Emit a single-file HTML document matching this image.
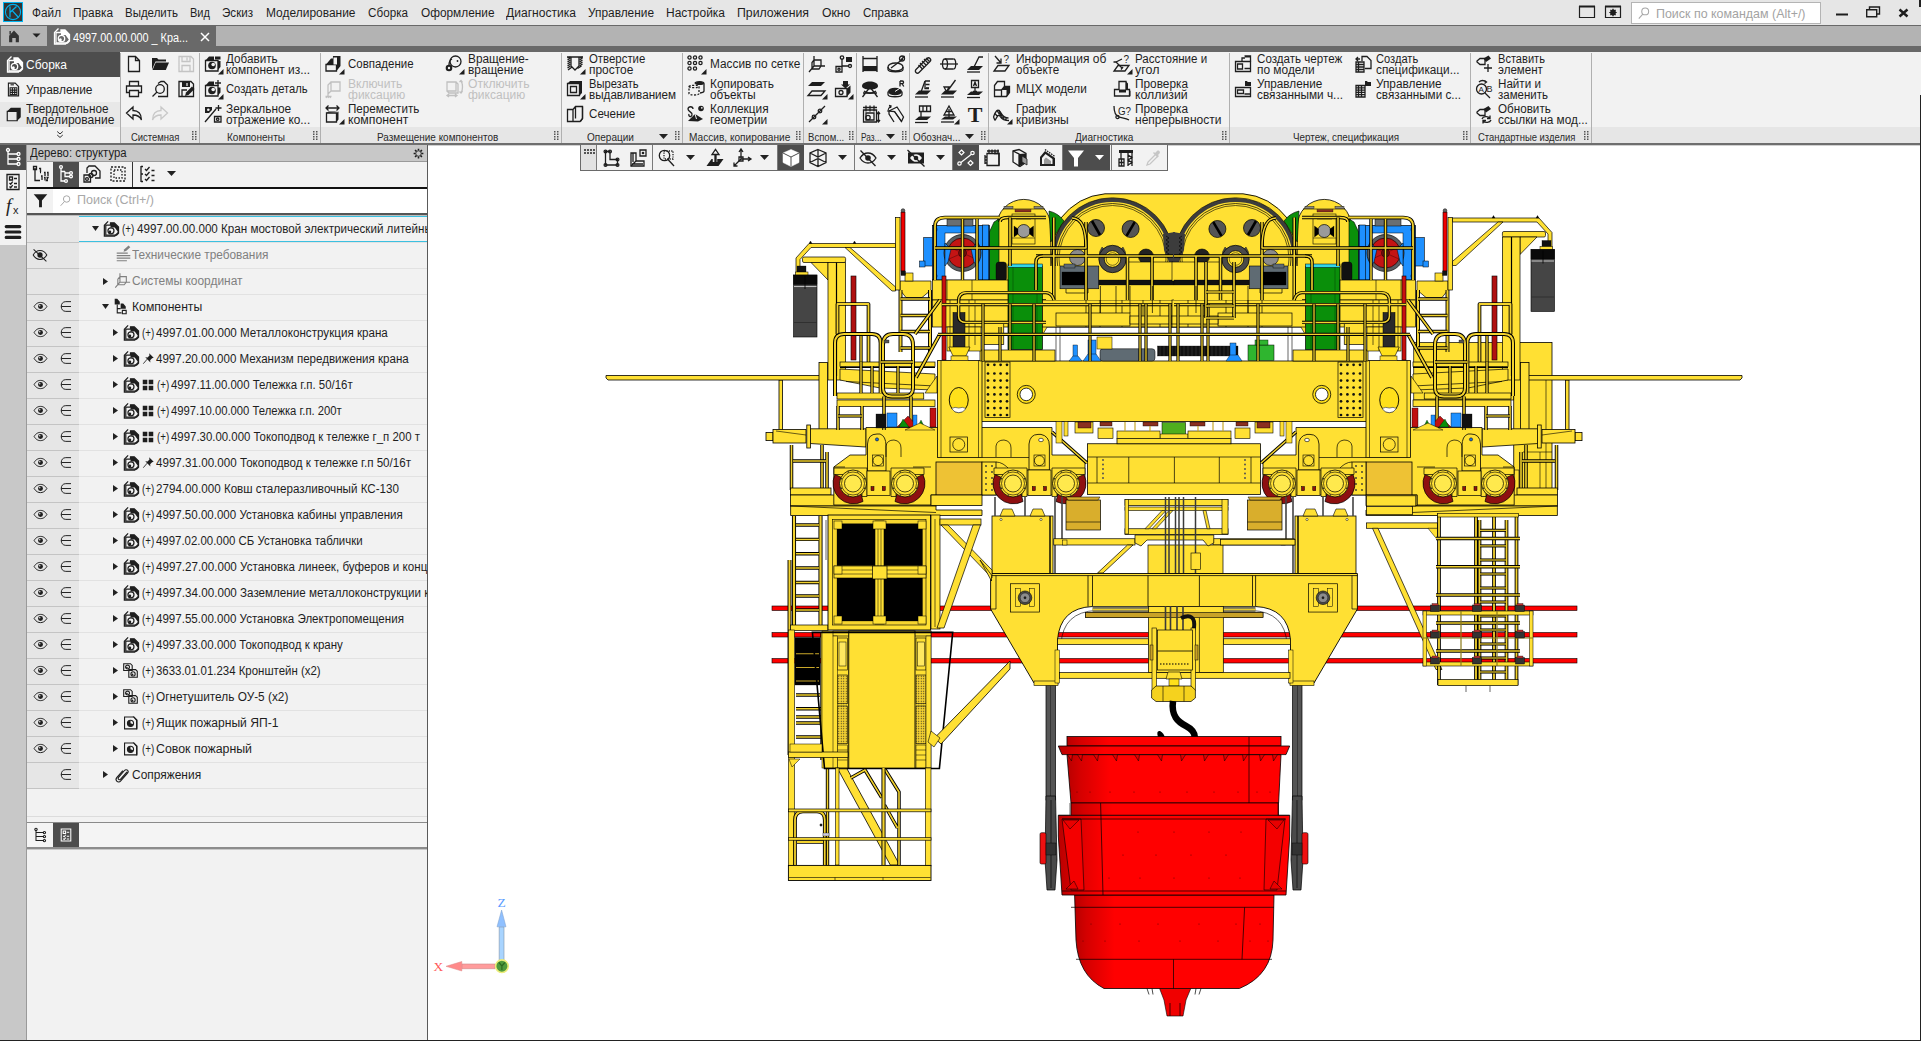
<!DOCTYPE html>
<html lang="ru"><head><meta charset="utf-8"><title>КОМПАС-3D</title><style>html,body{margin:0;padding:0}body{width:1921px;height:1041px;overflow:hidden;position:relative;background:#fff;font-family:"Liberation Sans",sans-serif;font-size:13px;color:#1e1e1e}
div,span.t,svg.i{position:absolute}
.t{white-space:pre;line-height:16px;transform-origin:0 50%;display:block}
svg.i{overflow:visible;color:#1e1e1e}
#tp svg.i{color:#1e1e1e}</style></head><body>
<svg width="0" height="0" style="position:absolute"><defs><symbol id="new" overflow="visible"><path d="M4.5 2.5h7l4 4v11h-11z M11.5 2.5v4h4" stroke="currentColor" fill="none" stroke-width="1.3"/></symbol><symbol id="open" overflow="visible"><path d="M2 4h5l1.5 1.5h7.5v2h-10.5l-3.5 8z" fill="currentColor" stroke="none"/><path d="M2.5 16l3.2-7.5h13.3l-3.2 7.5z" fill="currentColor" stroke="none"/></symbol><symbol id="save" overflow="visible"><path d="M3 2.5h12l2.5 2.5v12.5h-14.5z M6 2.5v5h8v-5 M11 3.5v3 M6 17.5v-6h8v6" stroke="currentColor" fill="none" stroke-width="1.3"/></symbol><symbol id="print" overflow="visible"><path d="M5.500 7v-4.5h9v4.500 M5.500 13.500h-3.000v-6.500h15v6.500h-3.000 M5.500 11.500h9v6h-9z" stroke="currentColor" fill="none" stroke-width="1.3"/></symbol><symbol id="preview" overflow="visible"><path d="M8 4.500l3-2h3l3.500 3.500v11.500h-9.500" stroke="currentColor" fill="none" stroke-width="1.3"/><circle cx="10" cy="10" r="4.300" stroke="currentColor" fill="none" stroke-width="1.3" fill="#f2f2f2"/><path d="M7 13l-4.500 4.500" stroke="currentColor" fill="none" stroke-width="1.3" stroke-width="2"/></symbol><symbol id="saveas" overflow="visible"><path d="M3 2.500h12l2.500 2.500v12.500h-14.500z" stroke="currentColor" fill="none" stroke-width="1.3"/><path d="M6 3h8v5h-8z" fill="currentColor" stroke="none"/><path d="M11 4v3" stroke="#f2f2f2" stroke-width="1.200"/><path d="M6 17v-6h5" stroke="currentColor" fill="none" stroke-width="1.3"/><path d="M9 17l1-3.500 6-6 2.500 2.500-6 6z" fill="currentColor" stroke="none"/></symbol><symbol id="undo" overflow="visible"><path d="M2.500 9l6.500-6v3.500c5 0 8.500 3 8.500 9.500c-1.500-3.500-4-5-8.500-5v4z" stroke="currentColor" fill="none" stroke-width="1.3"/></symbol><symbol id="redo" overflow="visible"><path d="M17.500 9l-6.500-6v3.500c-5 0-8.500 3-8.500 9.500c1.500-3.500 4-5 8.500-5v4z" stroke="currentColor" fill="none" stroke-width="1.3"/></symbol><symbol id="addcomp" overflow="visible"><path d="M2.500 6.500h12.500v10.500h-12.500z" stroke="currentColor" fill="none" stroke-width="1.3"/><path d="M2.500 6.500l3.500-4h5v4z M12 2.500h5.500v3h-5.500z M15 7h2.500v6l-2.500 3z" fill="currentColor" stroke="none"/><circle cx="9" cy="11.500" r="3.800" fill="currentColor" stroke="none"/><circle cx="10.200" cy="10.500" r="1.800" fill="#f2f2f2"/><path d="M20.500 15v5.500h-5.500z" fill="currentColor"/></symbol><symbol id="newpart" overflow="visible"><path d="M2.500 6.500h12.500v10.500h-12.500z" stroke="currentColor" fill="none" stroke-width="1.3"/><path d="M2.500 6.500l3.500-4h5v4z M15 8.500h2.500v5l-2.500 3z" fill="currentColor" stroke="none"/><path d="M15 1v6M12 4h6" stroke="currentColor" fill="none" stroke-width="1.3"/><circle cx="9" cy="11.500" r="3.800" fill="currentColor" stroke="none"/><circle cx="10.200" cy="10.500" r="1.800" fill="#f2f2f2"/><path d="M20.500 15v5.500h-5.500z" fill="currentColor"/></symbol><symbol id="mirror" overflow="visible"><path d="M2 18l11-13" stroke="currentColor" fill="none" stroke-width="1.3"/><path d="M2 3h7v3l-3 3h-4z" fill="currentColor" stroke="none"/><circle cx="5.300" cy="5.800" r="1.300" fill="#f2f2f2"/><path d="M15.500 1v6M12.500 4h6" stroke="currentColor" fill="none" stroke-width="1.3"/><path d="M11.500 12.500h6.500v5.500h-6.500z" stroke="currentColor" fill="none" stroke-width="1.3"/><circle cx="14.700" cy="15.200" r="1.200" stroke="currentColor" fill="none" stroke-width="1.3" stroke-width="1"/></symbol><symbol id="coincide" overflow="visible"><path d="M2 10.500h10.500v6.500h-10.500z" stroke="currentColor" fill="none" stroke-width="1.3"/><path d="M2 10.500l5-6 2 0v6z M9 2h7.500v10l-4 5v-6.500h-4z" fill="currentColor" stroke="none"/><path d="M9.500 3.500h3.500v7h-3.500z" fill="#f2f2f2"/><path d="M20.500 15v5.500h-5.500z" fill="currentColor"/></symbol><symbol id="fixon" overflow="visible"><path d="M7 3h9v9h-9z M7 12l-3 3v-9l3-3 M4 15v2 M1.500 17.500h6 M2 19l1-1.500 M4 19l1-1.500 M6 19l1-1.500" stroke="currentColor" fill="none" stroke-width="1.3" stroke-width="1"/></symbol><symbol id="movecomp" overflow="visible"><path d="M2.500 9h10v9h-10z" stroke="currentColor" fill="none" stroke-width="1.3"/><path d="M12.500 9l2-1.500v8l-2 2.500z M2.500 9l2-1.500h10" fill="currentColor" stroke="none"/><path d="M2 4h13 M4.500 1.500l-2.500 2.500 2.500 2.500 M12.500 1.500l2.500 2.500-2.500 2.500" stroke="currentColor" fill="none" stroke-width="1.3"/><path d="M20.500 15v5.500h-5.500z" fill="currentColor"/></symbol><symbol id="rotrot" overflow="visible"><circle cx="11.500" cy="7.500" r="5.500" stroke="currentColor" fill="none" stroke-width="1.3" stroke-width="1.500"/><circle cx="5" cy="14" r="3.300" fill="currentColor" stroke="none"/><circle cx="5" cy="14" r="1.200" fill="#f2f2f2"/><circle cx="13.500" cy="7" r=".9" fill="currentColor" stroke="none"/><path d="M5 11c0-3 1-5 3-6" stroke="currentColor" fill="none" stroke-width="1.3" stroke-width="1.500"/><path d="M20.500 15v5.500h-5.500z" fill="currentColor"/></symbol><symbol id="fixoff" overflow="visible"><path d="M3 3h9v9h-9z M12 3l2 2v9h-9l-2-2 M17 2c2 3 2 9 0 12 M15.500 3l1.500-1.500 1.500 2 M15.500 12.500l1.500 1.500 1.500-2 M3 16.500h10 M5 15l-2 1.500 2 1.500 M11 15l2 1.500-2 1.500" stroke="currentColor" fill="none" stroke-width="1.3" stroke-width="1"/></symbol><symbol id="hole" overflow="visible"><path d="M2 3h16 M6 3v9l4 4 4-4v-9" stroke="currentColor" fill="none" stroke-width="1.3"/><path d="M2.500 4l3-1M2.500 6l3-2M2.500 8l3-2M2.500 10l3-2M2.500 12l3-2M2.500 14l3-2M3 16l4-3M14.500 4l3-1M14.500 6l3-2M14.500 8l3-2M14.500 10l3-2M14.500 12l3-2M12.500 14.500l4-2.500" stroke="currentColor" fill="none" stroke-width="1.3" stroke-width=".8"/><path d="M20.500 15v5.500h-5.500z" fill="currentColor"/></symbol><symbol id="cutext" overflow="visible"><path d="M2.500 4.500h12v12h-12z" stroke="currentColor" fill="none" stroke-width="1.3"/><path d="M2.500 4.500l2.500-2.500h12v12l-2.500 2.500v-12z" fill="currentColor" stroke="none"/><path d="M5.500 7.500h6v6h-6z" stroke="currentColor" fill="none" stroke-width="1.3" stroke-width="2"/><path d="M20.500 15v5.500h-5.500z" fill="currentColor"/></symbol><symbol id="section" overflow="visible"><path d="M2.500 5.500h5.500v12h-5.500z M8 5.500l2.500-3h7v12l-2.500 3h-7.500 M10.500 2.500v12" stroke="currentColor" fill="none" stroke-width="1.3" stroke-width="1.400"/><path d="M15.500 17.500l2-3v-12" stroke="currentColor" fill="none" stroke-width="1.3" stroke-width="2"/></symbol><symbol id="gridarr" overflow="visible"><circle cx="3.5" cy="3.5" r="1.600" stroke="currentColor" fill="none" stroke-width="1.3" stroke-width="1.100"/><circle cx="3.5" cy="9" r="1.600" stroke="currentColor" fill="none" stroke-width="1.3" stroke-width="1.100"/><circle cx="3.5" cy="14.5" r="1.600" stroke="currentColor" fill="none" stroke-width="1.3" stroke-width="1.100"/><circle cx="9" cy="3.5" r="1.600" stroke="currentColor" fill="none" stroke-width="1.3" stroke-width="1.100"/><circle cx="9" cy="9" r="1.600" stroke="currentColor" fill="none" stroke-width="1.3" stroke-width="1.100"/><circle cx="9" cy="14.5" r="1.600" stroke="currentColor" fill="none" stroke-width="1.3" stroke-width="1.100"/><circle cx="14.5" cy="3.5" r="1.600" stroke="currentColor" fill="none" stroke-width="1.3" stroke-width="1.100"/><circle cx="14.5" cy="9" r="1.600" stroke="currentColor" fill="none" stroke-width="1.3" stroke-width="1.100"/><path d="M20.500 15v5.500h-5.500z" fill="currentColor"/></symbol><symbol id="copyobj" overflow="visible"><path d="M3 7.500c0 -1.500 10-1.500 10 0v7c0 2-10 2-10 0z M3 7.500c0 1.500 10 1.500 10 0" stroke="currentColor" fill="none" stroke-width="1.3" stroke-dasharray="2 1.500" stroke-width="1.100"/><path d="M9 4.500c0-2.500 9-2.500 9 0v7.500c0 1-2 1.800-4 2" stroke="currentColor" fill="none" stroke-width="1.3" stroke-width="1.100"/><path d="M9 4.500c0-2.500 9-2.500 9 0c0 2-9 2-9 0z" fill="currentColor" stroke="none"/></symbol><symbol id="collgeom" overflow="visible"><circle cx="15" cy="4.500" r="2.800" fill="currentColor" stroke="none"/><circle cx="15.800" cy="3.800" r=".9" fill="#f2f2f2"/><path d="M7 5c0-3-5-3-5 0s5 3 4 6-4 1-3-1" stroke="currentColor" fill="none" stroke-width="1.3" stroke-width="1.100"/><path d="M2 17l7-7 8 5-5 2.500z" fill="currentColor" stroke="none"/><path d="M9 10l1.500 5" stroke="#f2f2f2" stroke-width="1"/></symbol><symbol id="lcs" overflow="visible"><path d="M2 18l5-6 M7 12v-10 M7 12h11 M7 6h7v6 M7 6l-2 2.500v6.500 M14 12l-2 3h-7" stroke="currentColor" fill="none" stroke-width="1.3" stroke-width="1.100"/></symbol><symbol id="ctrlpt" overflow="visible"><circle cx="9" cy="3.500" r="1.700" stroke="currentColor" fill="none" stroke-width="1.3" stroke-width="1.100"/><path d="M9 5v7 M9 12h7" stroke="currentColor" fill="none" stroke-width="1.3"/><circle cx="17" cy="12" r="1.500" stroke="currentColor" fill="none" stroke-width="1.3" stroke-width="1.100"/><path d="M13 3h6v5h-6z" fill="currentColor" stroke="none"/><path d="M3 12.500h6v5.500h-6z" stroke="currentColor" fill="none" stroke-width="1.3"/><circle cx="6" cy="15.300" r="1.100" stroke="currentColor" fill="none" stroke-width="1.3" stroke-width="1"/></symbol><symbol id="offplane" overflow="visible"><path d="M5 3h13l-4 4h-13z" fill="currentColor" stroke="none"/><path d="M5 12h13l-4 4.500h-13z" stroke="currentColor" fill="none" stroke-width="1.3"/><path d="M20.500 15v5.500h-5.500z" fill="currentColor"/></symbol><symbol id="compplace" overflow="visible"><path d="M2.500 9.500h11.500v8h-11.500z" stroke="currentColor" fill="none" stroke-width="1.3"/><path d="M14 9.500l3.500-3v7l-3.500 4z M10 2h5v3.500h2l-4.500 4-4.500-4h2z" fill="currentColor" stroke="none"/><circle cx="8" cy="13.500" r="2" stroke="currentColor" fill="none" stroke-width="1.3"/><path d="M20.500 15v5.500h-5.500z" fill="currentColor"/></symbol><symbol id="lineseg" overflow="visible"><path d="M2 18l16-16" stroke="currentColor" fill="none" stroke-width="1.3"/><circle cx="7" cy="13" r="1.800" stroke="currentColor" fill="none" stroke-width="1.3" fill="#f2f2f2"/><circle cx="13" cy="7" r="1.800" stroke="currentColor" fill="none" stroke-width="1.3" fill="#f2f2f2"/><path d="M20.500 15v5.500h-5.500z" fill="currentColor"/></symbol><symbol id="dimlin" overflow="visible"><path d="M3 2v16 M17 2v16 M3 4.500h14" stroke="currentColor" fill="none" stroke-width="1.3"/><path d="M3 12h14v4.500h-14z" fill="currentColor" stroke="none"/><path d="M3 16.500h14" stroke="currentColor" fill="none" stroke-width="1.3"/></symbol><symbol id="dimdia" overflow="visible"><ellipse cx="9.500" cy="13" rx="7.500" ry="4" stroke="currentColor" fill="none" stroke-width="1.3" stroke-width="1.500"/><path d="M2 13v2.500c0 3 15 3 15 0v-2.500" stroke="currentColor" fill="none" stroke-width="1.3" stroke-width="1.500"/><path d="M5 14l12-9" stroke="currentColor" fill="none" stroke-width="1.3"/><circle cx="16" cy="4.500" r="2.500" stroke="currentColor" fill="none" stroke-width="1.3"/><path d="M14 7l4.500-5" stroke="currentColor" fill="none" stroke-width="1.3" stroke-width=".9"/></symbol><symbol id="dimang" overflow="visible"><path d="M2 7c0-6 16-6 16 0c0 2-3 3.500-8 3.500s-8-1.500-8-3.500z" fill="currentColor" stroke="none"/><path d="M10 8l-7.500 10 M10 8l7.500 10 M3 14l14 0" stroke="currentColor" fill="none" stroke-width="1.3" stroke-width="1.100"/><path d="M4 12c3 3 9 3 12 0" stroke="currentColor" fill="none" stroke-width="1.3" stroke-width="1.100"/></symbol><symbol id="dimrad" overflow="visible"><ellipse cx="9" cy="12.500" rx="7" ry="3.800" fill="currentColor" stroke="none"/><path d="M2 12.500v3c0 3 14 3 14 0v-3" stroke="currentColor" fill="none" stroke-width="1.3" stroke-width="1.500"/><path d="M9 12.500l6-4" stroke="#f2f2f2" stroke-width="1"/><path d="M14 2v5.500 M14 2h2.300c1.700 0 1.700 2.700 0 2.700h-2.300 M16 4.700l1.800 2.800" stroke="currentColor" fill="none" stroke-width="1.3" stroke-width="1"/></symbol><symbol id="dimsk" overflow="visible"><path d="M3.500 6h13v12h-13z M3 3.500h14 M6 1.500v6 M10 1.500v6 M14 1.500v6 M6 9h8v7h-8z" stroke="currentColor" fill="none" stroke-width="1.3" stroke-width="1.100"/><circle cx="8" cy="13.500" r="2.200" stroke="currentColor" fill="none" stroke-width="1.3" stroke-width="1.100"/><path d="M18.500 8v10 M17 10l1.500-2 1.500 2 M17 16l1.500 2 1.500-2" stroke="currentColor" fill="none" stroke-width="1.3" stroke-width=".9"/></symbol><symbol id="dimedge" overflow="visible"><path d="M3 7l8-4 6.500 10-2 4.500-7-10z" stroke="currentColor" fill="none" stroke-width="1.3" stroke-width="1.500"/><path d="M8.500 7.500l7 10 M3 7l0 3 5 8" stroke="currentColor" fill="none" stroke-width="1.3" stroke-width="1.100"/><path d="M5 2c-2 1.500-3 3-3 5 M3 1.500l2 .5-.5 2" stroke="currentColor" fill="none" stroke-width="1.3" stroke-width=".9"/></symbol><symbol id="thread" overflow="visible"><path d="M3 15.500l11-11c2-2 5 1 3 3l-11 11c-2 2-5-1-3-3z" stroke="currentColor" fill="none" stroke-width="1.3" stroke-width="1.400"/><path d="M7 9l4 4 M9 7l4 4 M11 5l4 4 M13 4l3.500 3.500 M5.500 11l4 4" stroke="currentColor" fill="none" stroke-width="1.3" stroke-width="1.600"/></symbol><symbol id="axisline" overflow="visible"><ellipse cx="6" cy="10" rx="2.500" ry="5" stroke="currentColor" fill="none" stroke-width="1.3"/><path d="M6 5h8.500 M6 15h8.500" stroke="currentColor" fill="none" stroke-width="1.3"/><path d="M14.500 5c3 0 3 10 0 10" stroke="currentColor" fill="none" stroke-width="1.3"/><path d="M1 10h18" stroke="currentColor" fill="none" stroke-width="1.3" stroke-width="1"/></symbol><symbol id="leader1" overflow="visible"><path d="M2 16l4-4h12l-4 4z" fill="currentColor" stroke="none"/><path d="M2 18h13" stroke="currentColor" fill="none" stroke-width="1.3"/><path d="M9 13l5-10h4" stroke="currentColor" fill="none" stroke-width="1.3"/></symbol><symbol id="rough" overflow="visible"><path d="M2 15.500l4-4h12l-4 4z" fill="currentColor" stroke="none"/><path d="M2 18h13" stroke="currentColor" fill="none" stroke-width="1.3"/><path d="M8 13l4-11 M12 2h5 M12.500 5.500h4 M13 9h3" stroke="currentColor" fill="none" stroke-width="1.3" stroke-width="1.100"/><path d="M12 2v7.500h4" stroke="currentColor" fill="none" stroke-width="1.3" stroke-width="1.100"/></symbol><symbol id="rough2" overflow="visible"><path d="M2 15.500l4-4h12l-4 4z" fill="currentColor" stroke="none"/><path d="M2 18h13" stroke="currentColor" fill="none" stroke-width="1.3"/><path d="M5 8h5l-2.500 4.500z M8.500 12l8-11" stroke="currentColor" fill="none" stroke-width="1.3" stroke-width="1.100"/></symbol><symbol id="base" overflow="visible"><path d="M2 16l4-3.500h12l-4 3.500z" fill="currentColor" stroke="none"/><path d="M2 18.500h13" stroke="currentColor" fill="none" stroke-width="1.3"/><path d="M6.500 1.500h7v7h-7z M10 8.500v4 M8 12.500h4" stroke="currentColor" fill="none" stroke-width="1.3" stroke-width="1.100"/><path d="M8.500 7l1.500-4 1.500 4 M9 5.700h2" stroke="currentColor" fill="none" stroke-width="1.3" stroke-width=".8"/></symbol><symbol id="tol" overflow="visible"><path d="M2 16l4-3.500h12l-4 3.500z" fill="currentColor" stroke="none"/><path d="M2 18.500h13" stroke="currentColor" fill="none" stroke-width="1.3"/><path d="M6.500 2h11v5.500h-11z M10 2v5.500 M13.700 2v5.500 M8 7.500v6" stroke="currentColor" fill="none" stroke-width="1.3" stroke-width="1.100"/></symbol><symbol id="mark" overflow="visible"><path d="M2 15.500l4-3h12l-4 3z" fill="currentColor" stroke="none"/><path d="M2 18h13" stroke="currentColor" fill="none" stroke-width="1.3"/><path d="M10 2l-5 9h10z M7 7.500h6 M10 5v9" stroke="currentColor" fill="none" stroke-width="1.3" stroke-width="1"/><path d="M20.500 15v5.500h-5.500z" fill="currentColor"/></symbol><symbol id="textT" overflow="visible"><text x="10" y="18" text-anchor="middle" font-family="Liberation Serif, serif" font-weight="bold" font-size="22" fill="currentColor">T</text></symbol><symbol id="info" overflow="visible"><path d="M2 17h11l4-5.500h-11z" stroke="currentColor" fill="none" stroke-width="1.3" stroke-width="1.100"/><path d="M3 2l6 7 M9 4.500v4.500h-4.500" stroke="currentColor" fill="none" stroke-width="1.3"/><text x="11.500" y="9" font-family="Liberation Sans, sans-serif" font-size="10" fill="currentColor">?</text></symbol><symbol id="mcx" overflow="visible"><path d="M2.500 6.500l3-4h7v5h5l0 6-3 4h-12z" stroke="currentColor" fill="none" stroke-width="1.3" stroke-width="1.500"/><path d="M12.500 7.500l-3 3.500h-7 M9.500 11v6.500" stroke="currentColor" fill="none" stroke-width="1.3" stroke-width="1.300"/><path d="M12.500 7.500h5v6l-3 4v-6.500h-5z" fill="currentColor" stroke="none"/></symbol><symbol id="curv" overflow="visible"><path d="M1.500 13c2-6 4-8 6-6s3 7 9 7" stroke="currentColor" fill="none" stroke-width="1.3" stroke-width="1.100"/><path d="M1.500 13l1.500 3.500 M3 9.500l2.500 3 M5 6.500l2.500 4 M7 6l2 6 M9 9l1.500 5.500 M11.500 12l.5 4 M14 13.500v3 M3 16.500c2-4 3.500-6 4.500-5s2 5 9.500 5" stroke="currentColor" fill="none" stroke-width="1.3" stroke-width=".8"/><path d="M20.500 15v5.500h-5.500z" fill="currentColor"/></symbol><symbol id="dist" overflow="visible"><path d="M2 17h11l4-5.500h-11z" stroke="currentColor" fill="none" stroke-width="1.3" stroke-width="1.100"/><path d="M4 8l6 6 M4 8l6-3" stroke="currentColor" fill="none" stroke-width="1.3" stroke-width="1.100"/><path d="M1.500 8h3 M9 15.500l2-2.500" stroke="currentColor" fill="none" stroke-width="1.3" stroke-width=".9"/><text x="11.500" y="9" font-family="Liberation Sans, sans-serif" font-size="10" fill="currentColor">?</text><path d="M20.500 15v5.500h-5.500z" fill="currentColor"/></symbol><symbol id="collis" overflow="visible"><path d="M7 2.500h7v8h3.500v6.500h-15v-6.500h4.500z" stroke="currentColor" fill="none" stroke-width="1.3" stroke-width="1.600"/><path d="M14 2.500l2 2v6h-2z M7 10.500h7v3h-7z M17.500 10.500l1 1.500v5l-1 .5z" fill="currentColor" stroke="none"/></symbol><symbol id="contin" overflow="visible"><path d="M2 2c0 6 2 10 5 11s7 1 10 3" stroke="currentColor" fill="none" stroke-width="1.3" stroke-width="1.100"/><circle cx="5.500" cy="13" r="1.600" stroke="currentColor" fill="none" stroke-width="1.3" stroke-width="1"/><text x="6" y="10.500" font-family="Liberation Sans, sans-serif" font-size="10.500" fill="currentColor" textLength="13" lengthAdjust="spacingAndGlyphs">G?</text></symbol><symbol id="mkdraw" overflow="visible"><path d="M2.500 7.500h15v10h-15z M4.500 10h5v5h-5z M11.500 14.500h6" stroke="currentColor" fill="none" stroke-width="1.3" stroke-width="1.100"/><path d="M9 7.500v-3.500h3 M11.500 2h6v5.500" stroke="currentColor" fill="none" stroke-width="1.3" stroke-width="1.100"/><path d="M12 2h5.500v1.500h-5.500z" fill="currentColor" stroke="none"/></symbol><symbol id="mngdraw" overflow="visible"><path d="M2.500 8.500h15v9h-15z M4.500 11h6v3.500h-6z M11.500 15h6" stroke="currentColor" fill="none" stroke-width="1.3" stroke-width="1.100"/><path d="M12 2h2l.7 1h3.300v4h-6z" fill="currentColor" stroke="none"/></symbol><symbol id="mkspec" overflow="visible"><path d="M3 8h8v10h-8z M3 10.500h8 M3 13h8 M3 15.500h8 M5.500 8v10" stroke="currentColor" fill="none" stroke-width="1.3" stroke-width="1"/><path d="M9 7v-4.500h5l4 4v8h-6" stroke="currentColor" fill="none" stroke-width="1.3" stroke-width="1.100"/><path d="M3 5h4 M5 3l-2 2 2 2" stroke="currentColor" fill="none" stroke-width="1.3" stroke-width="1"/></symbol><symbol id="mngspec" overflow="visible"><path d="M3 6.500h9v11.500h-9z M3 8.800h9 M3 11.100h9 M3 13.400h9 M3 15.700h9 M5.500 6.500v11.500 M8.500 6.500v11.500" stroke="currentColor" fill="none" stroke-width="1.3" stroke-width="1"/><path d="M12 2h2l.7 1h3.300v4h-6z" fill="currentColor" stroke="none"/></symbol><symbol id="insel" overflow="visible"><path d="M3 7l3-2.500 5 0 0 6-5 0-3-2.500z" stroke="currentColor" fill="none" stroke-width="1.3"/><path d="M9.500 4.500l5-3 2.500 3-5 3.500z" fill="currentColor" stroke="none"/><path d="M14 10v8 M10 14h8" stroke="currentColor" fill="none" stroke-width="1.3" stroke-width="2"/></symbol><symbol id="findrep" overflow="visible"><circle cx="7.500" cy="10" r="5" stroke="currentColor" fill="none" stroke-width="1.3" stroke-width="1.100"/><path d="M11 14l5 5" stroke="currentColor" fill="none" stroke-width="1.3" stroke-width="1.600"/><text x="4.500" y="13" font-family="Liberation Sans, sans-serif" font-size="8" fill="currentColor">A</text><text x="12.500" y="13" font-family="Liberation Sans, sans-serif" font-size="9" fill="currentColor">B</text><path d="M5 3c2-2 5-2 7 0 M10.500 1.500l2 1.500-2 1.500" stroke="currentColor" fill="none" stroke-width="1.3" stroke-width=".9"/></symbol><symbol id="updref" overflow="visible"><path d="M3 8l3-2.500 5 0 0 6-5 0-3-2.500z" stroke="currentColor" fill="none" stroke-width="1.3"/><path d="M9.500 5l5-3 2.500 3-5 3.500z" fill="currentColor" stroke="none"/><path d="M8 15c1-3 6-3 8-1 M16 11.500v3h-3 M17 16c-1 3-6 3-8 1 M9 19.500v-3h3" stroke="currentColor" fill="none" stroke-width="1.3" stroke-width="1.100"/></symbol><symbol id="asm" overflow="visible"><path d="M6.500 1.500l-4 4v11.500h11l4-4" stroke="currentColor" fill="none" stroke-width="1.3" stroke-width="1"/><path d="M4 5.500h5v-2.500h4l4.500 4.500v6.500l-2 2h-11.500z" stroke="currentColor" fill="none" stroke-width="1.3" stroke-width="1.500"/><path d="M9 3h4l4.500 4.500v6l-4-5.500h-4.500z" fill="currentColor" stroke="none"/><circle cx="9.500" cy="11.500" r="3.200" stroke="currentColor" fill="none" stroke-width="1.3" stroke-width="1.400"/><circle cx="8.300" cy="12.700" r="1.500" fill="currentColor" stroke="none"/></symbol><symbol id="home" overflow="visible"><path d="M3 19v-9.500l7-7.500 7 7.500v9.500h-4.500v-6h-5v6z" fill="currentColor" stroke="none"/><path d="M4.500 3v5" stroke="currentColor" stroke-width="2"/></symbol><symbol id="manage" overflow="visible"><path d="M4 2.500h8l4 4v11h-12z" stroke="currentColor" fill="none" stroke-width="1.3"/><path d="M6 8h8v8h-8z M6 10.700h8 M6 13.400h8 M8.700 8v8 M11.400 8v8" stroke="currentColor" fill="none" stroke-width="1.3" stroke-width="1"/><path d="M6.500 4.500h4" stroke="currentColor" fill="none" stroke-width="1.3"/></symbol><symbol id="solid" overflow="visible"><path d="M2.500 7h11v10.500h-11z" stroke="currentColor" fill="none" stroke-width="1.3" stroke-width="1.500"/><path d="M2.500 7l4-4h11v10.500l-4 4v-10.500z" fill="currentColor" stroke="none"/></symbol><symbol id="chev2" overflow="visible"><path d="M6 5l4 3.500 4-3.500 M6 10l4 3.500 4-3.500" stroke="currentColor" fill="none" stroke-width="1.3"/></symbol><symbol id="tree" overflow="visible"><path d="M5 3.500v13.500h10 M5 7h10 M5 12h10" stroke="currentColor" fill="none" stroke-width="1.3"/><circle cx="5" cy="3" r="1.500" stroke="currentColor" fill="none" stroke-width="1.3" stroke-width="1" fill="#4d4d4d"/><circle cx="15.500" cy="7" r="1.500" stroke="currentColor" fill="none" stroke-width="1.3" stroke-width="1" fill="#4d4d4d"/><circle cx="15.500" cy="12" r="1.500" stroke="currentColor" fill="none" stroke-width="1.3" stroke-width="1" fill="#4d4d4d"/><circle cx="15.500" cy="17" r="1.500" stroke="currentColor" fill="none" stroke-width="1.3" stroke-width="1" fill="#4d4d4d"/></symbol><symbol id="treeb" overflow="visible"><path d="M5 3.500v13.500h10 M5 7h10 M5 12h10" stroke="currentColor" fill="none" stroke-width="1.3"/><circle cx="5" cy="3" r="1.500" stroke="currentColor" fill="none" stroke-width="1.3" stroke-width="1" fill="#f2f2f2"/><circle cx="15.500" cy="7" r="1.500" stroke="currentColor" fill="none" stroke-width="1.3" stroke-width="1" fill="#f2f2f2"/><circle cx="15.500" cy="12" r="1.500" stroke="currentColor" fill="none" stroke-width="1.3" stroke-width="1" fill="#f2f2f2"/><circle cx="15.500" cy="17" r="1.500" stroke="currentColor" fill="none" stroke-width="1.3" stroke-width="1" fill="#f2f2f2"/></symbol><symbol id="checkl" overflow="visible"><path d="M4 2.500h12v15h-12z" stroke="currentColor" fill="none" stroke-width="1.3"/><path d="M6.500 5h3v3h-3z M11 6.500h3 M6.500 11l1.200 1.200 2-2.500 M11 11.500h3 M6.500 14.500l1.200 1.200 2-2.500 M11 15h3" stroke="currentColor" fill="none" stroke-width="1.3" stroke-width="1.100"/></symbol><symbol id="fx" overflow="visible"><text x="3" y="15" font-family="Liberation Serif, serif" font-style="italic" font-size="19" fill="currentColor">f</text><text x="10" y="17" font-family="Liberation Sans, sans-serif" font-size="11" fill="currentColor">x</text></symbol><symbol id="bars" overflow="visible"><path d="M2.500 4h15 M2.500 10h15 M2.500 16h15" stroke="currentColor" stroke-width="3.600" stroke-linecap="round"/></symbol><symbol id="gear" overflow="visible"><circle cx="10" cy="10" r="4.200" stroke="currentColor" fill="none" stroke-width="1.3" stroke-width="2"/><path d="M10 2.500v3M10 14.500v3M2.500 10h3M14.500 10h3M4.700 4.700l2.100 2.100M13.200 13.200l2.100 2.100M4.700 15.300l2.100-2.100M13.200 6.800l2.100-2.100" stroke="currentColor" stroke-width="2.400"/></symbol><symbol id="tb1" overflow="visible"><path d="M5 4v12.500h5" stroke="currentColor" fill="none" stroke-width="1.3"/><path d="M3.500 2.500h3v3h-3z" stroke="currentColor" fill="none" stroke-width="1.3" stroke-width="1" fill="#f2f2f2"/><path d="M9 4.500h1.500v3.500 M11 12h1v4 M14 8.500h1v3.500 M17 8.500h1v3.500 M14 13.500h1v3 M16.500 13.500h1.500l-1.500 3h1.500 M11 8.500l-1 0" stroke="currentColor" fill="none" stroke-width="1.3" stroke-width="1"/></symbol><symbol id="tb2" overflow="visible"><path d="M5 4v13h4 M5 7.500h4 M9 7.500v5h5 M9 9h5" stroke="currentColor" fill="none" stroke-width="1.3"/><circle cx="5" cy="3" r="1.400" stroke="currentColor" fill="none" stroke-width="1.3" stroke-width="1" fill="#4d4d4d"/><circle cx="10" cy="17" r="1.400" stroke="currentColor" fill="none" stroke-width="1.3" stroke-width="1" fill="#4d4d4d"/><circle cx="15" cy="9" r="1.400" stroke="currentColor" fill="none" stroke-width="1.3" stroke-width="1" fill="#4d4d4d"/><circle cx="15" cy="12.500" r="1.400" stroke="currentColor" fill="none" stroke-width="1.3" stroke-width="1" fill="#4d4d4d"/></symbol><symbol id="tb3" overflow="visible"><path d="M5 9v-5l2-2h6l5 5v7h-5" stroke="currentColor" fill="none" stroke-width="1.3"/><circle cx="12" cy="9" r="2.500" stroke="currentColor" fill="none" stroke-width="1.3" stroke-width="1.100"/><path d="M2 11h5.500l1 1v6h-6.500z" stroke="currentColor" fill="none" stroke-width="1.3" fill="#f2f2f2"/><circle cx="5" cy="15" r="1.400" stroke="currentColor" fill="none" stroke-width="1.3" stroke-width="1"/><circle cx="9" cy="11.500" r="2" stroke="currentColor" fill="none" stroke-width="1.3" stroke-width="1.100" fill="#f2f2f2"/></symbol><symbol id="tb4" overflow="visible"><path d="M3 3h14v14h-14z" stroke="currentColor" fill="none" stroke-width="1.3" stroke-dasharray="2 1.500"/><path d="M6 6h8v8h-8z" stroke="currentColor" fill="none" stroke-width="1.3" stroke-dasharray="1.500 1.500" stroke-width="1"/></symbol><symbol id="tb5" overflow="visible"><path d="M4 2v16 M4 2.500h2 M4 10h2 M4 17.500h2" stroke="currentColor" fill="none" stroke-width="1.3"/><path d="M8 5l1.500 1.500 3-3.500 M8 10l1.500 1.500 3-3.500 M8 15l1.500 1.500 3-3.500 M14.500 6.500h3 M14.500 11.500h3 M14.500 16.500h3" stroke="currentColor" fill="none" stroke-width="1.3" stroke-width="1.100"/></symbol><symbol id="filter" overflow="visible"><path d="M2 2.500h16l-6.300 7.500v8h-3.400v-8z" fill="currentColor" stroke="none"/></symbol><symbol id="mag" overflow="visible"><circle cx="11.500" cy="8" r="4.300" stroke="currentColor" fill="none" stroke-width="1.3" stroke-width="1.200"/><path d="M8.500 11.500l-5 5.500" stroke="currentColor" fill="none" stroke-width="1.3" stroke-width="2"/></symbol><symbol id="eye" overflow="visible"><path d="M1.500 10c2.500-4.500 6-5.500 8.500-5.500s6 1 8.500 5.500c-2.500 4.500-6 5.500-8.500 5.500s-6-1-8.500-5.500z" stroke="currentColor" fill="none" stroke-width="1.3" stroke-width="1.400"/><circle cx="10" cy="10" r="3.300" fill="currentColor" stroke="none"/><circle cx="9" cy="9" r="1" fill="#e6e6e6"/></symbol><symbol id="eyeoff" overflow="visible"><path d="M1.500 10c2.500-4.500 6-5.500 8.500-5.500s6 1 8.500 5.500c-2.500 4.500-6 5.500-8.500 5.500s-6-1-8.500-5.500z" stroke="currentColor" fill="none" stroke-width="1.3" stroke-width="1.400"/><circle cx="10" cy="10" r="3.300" fill="currentColor" stroke="none"/><path d="M2 3l16 15" stroke="currentColor" fill="none" stroke-width="1.3" stroke-width="1.200"/></symbol><symbol id="elem" overflow="visible"><path d="M16 3.500h-7c-4 0-6 3-6 6.500s2 6.500 6 6.500h7 M3 10h13" stroke="currentColor" fill="none" stroke-width="1.3" stroke-width="1.200"/></symbol><symbol id="tech" overflow="visible"><path d="M2 9.500h13 M2 12.500h16 M2 15.500h16 M2 18.500h12" stroke="currentColor" fill="none" stroke-width="1.3" stroke-width="1"/><path d="M10 8l1-3 5-4.500 2 2-5 4.500z" fill="currentColor" stroke="none"/></symbol><symbol id="cs" overflow="visible"><path d="M1.500 18.500l5.500-6.500 M7 12v-10.500 M7 12h12 M7 5.500h7.500v6.500 M7 5.500l-2.500 3v6.500 M14.500 12l-2.500 3h-7.500" stroke="currentColor" fill="none" stroke-width="1.3" stroke-width="1"/></symbol><symbol id="comps" overflow="visible"><path d="M2 1h3l3 3.500v3h-6z M9 6.500h3l3 3.500v2.500h-6z" fill="currentColor" stroke="none"/><path d="M5 7.500v10h5 M5 12.500h4" stroke="currentColor" fill="none" stroke-width="1.3" stroke-width="1.400"/><path d="M11 14.500h4.500v4h-4.500z" stroke="currentColor" fill="none" stroke-width="1.3" stroke-width="1.400"/></symbol><symbol id="pin" overflow="visible"><path d="M2 18l6-7" stroke="currentColor" fill="none" stroke-width="1.3" stroke-width="1.400"/><path d="M11 2l7 7-2.500.5-3 3 .5 3.500-8-8 3.500.5 3-3z" fill="currentColor" stroke="none"/></symbol><symbol id="grid4" overflow="visible"><path d="M2.500 2.500h6.500v6.500h-6.500z M11 2.500h6.500v6.500h-6.500z M2.500 11h6.500v6.500h-6.500z M11 11h6.500v6.500h-6.500z" fill="currentColor" stroke="none"/></symbol><symbol id="multi" overflow="visible"><path d="M2 2h8l2 2v6h-10z" stroke="currentColor" fill="none" stroke-width="1.3" stroke-width="1.400"/><circle cx="6.500" cy="6" r="2.300" stroke="currentColor" fill="none" stroke-width="1.3" stroke-width="1.200"/><circle cx="5.800" cy="6.700" r="1" fill="currentColor" stroke="none"/><path d="M8 9h8l2 2v7h-10z" stroke="currentColor" fill="none" stroke-width="1.3" stroke-width="1.400" fill="#f2f2f2"/><circle cx="13" cy="14" r="2.500" stroke="currentColor" fill="none" stroke-width="1.3" stroke-width="1.200"/><circle cx="12.300" cy="14.700" r="1.100" fill="currentColor" stroke="none"/></symbol><symbol id="part" overflow="visible"><path d="M3 3.500h11l3.500 3.500v10.500h-14.500z" stroke="currentColor" fill="none" stroke-width="1.3" stroke-width="1.600"/><path d="M14 3l4 4v10l-1.500 1.500v-11l-4-4.500z" fill="currentColor" stroke="none"/><circle cx="10" cy="11" r="3.600" stroke="currentColor" fill="none" stroke-width="1.3" stroke-width="1.500"/><path d="M10 11v-3.600a3.600 3.600 0 1 0 3.400 4.600z" fill="currentColor" stroke="none"/></symbol><symbol id="clip" overflow="visible"><path d="M16.500 7l-7.500 8.500c-1.500 1.700-4-.5-2.500-2.200l7-8c2.300-2.600 5.800.6 3.600 3.200l-8 9c-3 3.400-7.400-.6-4.500-4l7-8" stroke="currentColor" fill="none" stroke-width="1.3" stroke-width="1.100"/></symbol><symbol id="grip" overflow="visible"><rect x="1" y="1" width="2" height="2" fill="currentColor"/><rect x="1" y="4" width="2" height="2" fill="currentColor"/><rect x="4" y="1" width="2" height="2" fill="currentColor"/><rect x="4" y="4" width="2" height="2" fill="currentColor"/><rect x="7" y="1" width="2" height="2" fill="currentColor"/><rect x="7" y="4" width="2" height="2" fill="currentColor"/><rect x="10" y="1" width="2" height="2" fill="currentColor"/><rect x="10" y="4" width="2" height="2" fill="currentColor"/></symbol><symbol id="vt1" overflow="visible"><path d="M4.500 3.500h4.500v8h7.500v5.500h-12z" stroke="currentColor" fill="none" stroke-width="1.3"/><circle cx="4.500" cy="3.500" r="1.400" stroke="currentColor" fill="none" stroke-width="1.3" stroke-width="1" fill="#f2f2f2"/><circle cx="9" cy="3.500" r="1.400" stroke="currentColor" fill="none" stroke-width="1.3" stroke-width="1" fill="#f2f2f2"/><circle cx="4.500" cy="17" r="1.400" stroke="currentColor" fill="none" stroke-width="1.3" stroke-width="1" fill="#f2f2f2"/><circle cx="16.500" cy="17" r="1.400" stroke="currentColor" fill="none" stroke-width="1.3" stroke-width="1" fill="#f2f2f2"/><circle cx="16.500" cy="11.500" r="1.400" stroke="currentColor" fill="none" stroke-width="1.3" stroke-width="1" fill="#f2f2f2"/></symbol><symbol id="vt2" overflow="visible"><path d="M3 5h5v8h8v5h-13z" stroke="currentColor" fill="none" stroke-width="1.3" stroke-width="1.500"/><path d="M8 13l-5 5 M5 5v9 M4 16h11" stroke="currentColor" fill="none" stroke-width="1.3" stroke-width="1"/><path d="M12 2h6v6h-6z" stroke="currentColor" fill="none" stroke-width="1.3" stroke-width="1.300"/><circle cx="15" cy="5" r="1.300" fill="currentColor" stroke="none"/></symbol><symbol id="vzoom" overflow="visible"><circle cx="7.500" cy="7.500" r="5.200" stroke="currentColor" fill="none" stroke-width="1.3" stroke-width="1.100"/><path d="M11 11.500l6 6.500" stroke="currentColor" fill="none" stroke-width="1.3" stroke-width="2"/><path d="M7 3h9v8h-9z" stroke="currentColor" fill="none" stroke-width="1.3" stroke-width="1" stroke-dasharray="1.200 1.200"/></symbol><symbol id="vnorm" overflow="visible"><path d="M1.500 18l5-7h12l-5 7z" fill="currentColor" stroke="none"/><path d="M10 14v-9" stroke="#f2f2f2" stroke-width="4.500"/><path d="M10 14.500v-8h-3l3.500-5 3.500 5h-3v8" stroke="currentColor" fill="none" stroke-width="1.3" stroke-width="1.300" fill="#f2f2f2"/></symbol><symbol id="vorient" overflow="visible"><path d="M9 11v-9.500 M7 4l2-3 2 3 M9 11h10 M16 9l3 2-3 2 M9 11l-7 7 M2 14.500v3.500h3.500" stroke="currentColor" fill="none" stroke-width="1.3" stroke-width="1"/><path d="M7 9h4v4h-4z" stroke="currentColor" fill="none" stroke-width="1.3" stroke-width="1.100" fill="#f2f2f2"/></symbol><symbol id="vshade" overflow="visible"><path d="M10 1.500l8 3.500v9.500l-8 4-8-4v-9.500z" fill="#fff" stroke="#fff" stroke-width=".5"/><path d="M2 5l8 4 8-4 M10 9v9.500" stroke="#4d4d4d" stroke-width="1" fill="none"/></symbol><symbol id="vwire" overflow="visible"><path d="M10 1.500l8 3.500v9.500l-8 4-8-4v-9.500z M2 5l8 4 8-4 M10 9v9.500 M10 1.500v9 M2 14.500l8-4 8 4" stroke="currentColor" fill="none" stroke-width="1.3" stroke-width="1"/></symbol><symbol id="veyeoff" overflow="visible"><path d="M2 10c2.500-4 5.500-5 8-5s5.500 1 8 5c-2.500 4-5.500 5-8 5s-5.500-1-8-5z" stroke="currentColor" fill="none" stroke-width="1.3" stroke-width="1.300"/><circle cx="10" cy="10" r="2.800" fill="currentColor" stroke="none"/><path d="M2.500 2.500l15 15.500" stroke="currentColor" fill="none" stroke-width="1.3" stroke-width="1.200"/></symbol><symbol id="veyebox" overflow="visible"><path d="M2 4.500h16v11h-16z" fill="currentColor" stroke="none"/><path d="M4 10c2-3 4-3.800 6-3.800s4 .8 6 3.800c-2 3-4 3.800-6 3.800s-4-.8-6-3.800z" fill="#f2f2f2"/><circle cx="10" cy="10" r="2.300" fill="currentColor" stroke="none"/><path d="M1.500 2l17 16.500" stroke="currentColor" fill="none" stroke-width="1.3" stroke-width="1"/></symbol><symbol id="vnodes" overflow="visible"><path d="M3 16l14-11" stroke="#fff" stroke-width="1.200"/><path d="M5.500 2l2.500 2.500-2.500 2.500-2.500-2.500z M14.500 12.500l2.500 2.500-2.500 2.500-2.500-2.500z" stroke="#fff" fill="none" stroke-width="1.200"/><circle cx="3.500" cy="15.500" r="1.700" fill="#4d4d4d" stroke="#fff" stroke-width="1.200"/><circle cx="16.500" cy="5" r="1.700" fill="#4d4d4d" stroke="#fff" stroke-width="1.200"/></symbol><symbol id="vdim" overflow="visible"><path d="M4 5.500h12v12h-12z M4 3h12 M6 1.500v4M9 1.500v4M12 1.500v4M15 1.500v4 M2 7v9M2 9h2M2 12h2M2 15h2" stroke="currentColor" fill="none" stroke-width="1.3" stroke-width="1"/><path d="M11 5.500l5 0 0 12" stroke="currentColor" fill="none" stroke-width="1.3" stroke-width="1.800"/></symbol><symbol id="vsec" overflow="visible"><path d="M3 3l6-1.500 7 4v9l-6 4-7-4.500z" stroke="currentColor" fill="none" stroke-width="1.3" stroke-width="1.100"/><path d="M9 6l7-.5v9l-7 4z" fill="currentColor" stroke="none"/><path d="M3 3l6 3v12.500" stroke="currentColor" fill="none" stroke-width="1.3" stroke-width="1"/><path d="M12 8l5 3v6l-5-3z" fill="#999" stroke="currentColor" stroke-width=".8"/></symbol><symbol id="vlayers" overflow="visible"><path d="M3 18v-9l5-6 10 7v8z" fill="currentColor" stroke="none"/><path d="M5 16v-6l3.500-4 7 5v5z" fill="#f2f2f2"/><path d="M7 16v-4.500l2-2 5 3.500v3z" fill="#999"/><path d="M8 1.500l10 7" stroke="currentColor" fill="none" stroke-width="1.3" stroke-dasharray="1.500 1" stroke-width="1"/></symbol><symbol id="vfilter" overflow="visible"><path d="M2 2.500h16l-6 7.500v8.500h-4v-8.500z" fill="#fff"/></symbol><symbol id="vcrane" overflow="visible"><path d="M3 2h14v3h-14z" fill="currentColor" stroke="none"/><path d="M12 5v13 M16 5v13 M12 7l4 2.500-4 2.500 4 2.500-4 2.500" stroke="currentColor" fill="none" stroke-width="1.3" stroke-width="1.100"/><path d="M5 5v6" stroke="currentColor" fill="none" stroke-width="1.3" stroke-width="1"/><path d="M3 11h5v7h-5z M3 14.500h5 M5.500 11v7" stroke="currentColor" fill="none" stroke-width="1.3" stroke-width="1"/></symbol><symbol id="vpick" overflow="visible"><path d="M3 17l1-3 8-8 2 2-8 8z" stroke="currentColor" fill="none" stroke-width="1.3" stroke-width="1.100"/><path d="M11 5l2-2c1.500-1.500 4 1 2.500 2.500l-2 2 1 1-1 1-4.500-4.500 1-1z" fill="currentColor" stroke="none"/></symbol></defs></svg>
<div style="left:0px;top:0px;width:1921px;height:25px;background:#e6e6e6;"></div>
<svg class="i" style="left:3px;top:2px" width="20" height="20" viewBox="0 0 20 20"><rect x=".5" y=".5" width="19" height="19" fill="#333" stroke="#00b4f0"/><circle cx="10" cy="10" r="7.600" fill="none" stroke="#00b4f0" stroke-width="1.100"/><path d="M7 4.500v11 M13.500 4.500l-6.500 6 M9.500 8.800l6 6.700" stroke="#00b4f0" stroke-width="1.200" fill="none"/></svg>
<span class="t" style="left:32px;top:5.2px;font-size:12.5px;transform:scaleX(0.944);">Файл</span>
<span class="t" style="left:73px;top:5.2px;font-size:12.5px;transform:scaleX(0.947);">Правка</span>
<span class="t" style="left:125px;top:5.2px;font-size:12.5px;transform:scaleX(0.919);">Выделить</span>
<span class="t" style="left:190px;top:5.2px;font-size:12.5px;transform:scaleX(0.884);">Вид</span>
<span class="t" style="left:222px;top:5.2px;font-size:12.5px;transform:scaleX(0.928);">Эскиз</span>
<span class="t" style="left:265.5px;top:5.2px;font-size:12.5px;transform:scaleX(0.957);">Моделирование</span>
<span class="t" style="left:367.5px;top:5.2px;font-size:12.5px;transform:scaleX(0.935);">Сборка</span>
<span class="t" style="left:420.5px;top:5.2px;font-size:12.5px;transform:scaleX(0.947);">Оформление</span>
<span class="t" style="left:506px;top:5.2px;font-size:12.5px;transform:scaleX(0.966);">Диагностика</span>
<span class="t" style="left:588px;top:5.2px;font-size:12.5px;transform:scaleX(0.950);">Управление</span>
<span class="t" style="left:666px;top:5.2px;font-size:12.5px;transform:scaleX(0.959);">Настройка</span>
<span class="t" style="left:737px;top:5.2px;font-size:12.5px;transform:scaleX(0.984);">Приложения</span>
<span class="t" style="left:821.7px;top:5.2px;font-size:12.5px;transform:scaleX(0.974);">Окно</span>
<span class="t" style="left:862.7px;top:5.2px;font-size:12.5px;transform:scaleX(0.924);">Справка</span>
<svg class="i" style="left:1578px;top:5px" width="46" height="14" viewBox="0 0 46 14"><path d="M1.500 1.500h15v11h-15z M27.500 1.500h15v11h-15z" stroke="#1e1e1e" fill="none" stroke-width="1.200"/><path d="M1 1.500h16 M27 1.500h16" stroke="#1e1e1e" stroke-width="2"/><circle cx="35" cy="7.500" r="2" fill="none" stroke="#1e1e1e" stroke-width="1.800"/><path d="M35 3.800v7.400M31.300 7.500h7.400M32.400 4.900l5.200 5.200M32.400 10.100l5.200-5.200" stroke="#1e1e1e" stroke-width="1.200"/></svg>
<div style="left:1631px;top:2px;width:188px;height:20px;background:#fff;border:1px solid #b4b4b4"></div>
<svg class="i" style="left:1636px;top:5px;color:#a6a6a6" width="16" height="16" viewBox="0 0 20 20"><use href="#mag"/></svg>
<span class="t" style="left:1656.2px;top:5.6px;font-size:13.5px;color:#a3a3a3;transform:scaleX(0.921);">Поиск по командам (Alt+/)</span>
<svg class="i" style="left:1832px;top:3px" width="84" height="18" viewBox="0 0 84 18"><path d="M4 11.500h12" stroke="#1e1e1e" stroke-width="2"/><path d="M34.700 6.700h10v7h-10z M37.500 6.500v-2.500h10v7h-2.500" stroke="#1e1e1e" fill="none" stroke-width="1.400"/><path d="M67.500 6.500l8 7 M75.500 6.500l-8 7" stroke="#1e1e1e" stroke-width="2.400"/></svg>
<div style="left:0px;top:25px;width:1921px;height:27px;background:#696969;"></div>
<div style="left:216px;top:26px;width:1705px;height:20px;background:#b3b3b3;"></div>
<div style="left:1px;top:26px;width:46px;height:20px;background:#b3b3b3;"></div>
<svg class="i" style="left:6.5px;top:29px;color:#333" width="14" height="14" viewBox="0 0 20 20"><use href="#home"/></svg>
<svg class="i" style="left:32px;top:33px" width="9" height="5" viewBox="0 0 9 5"><path d="M.5 .5h8l-4 4z" fill="#222"/></svg>
<svg class="i" style="left:52px;top:27px;color:#fff" width="18" height="18" viewBox="0 0 18 18"><use href="#asm"/></svg>
<span class="t" style="left:73px;top:29.9px;font-size:12.5px;color:#fff;transform:scaleX(0.869);">4997.00.00.000 _ Кра...</span>
<svg class="i" style="left:200px;top:32px" width="10" height="10" viewBox="0 0 10 10"><path d="M1 1l8 8M9 1l-8 8" stroke="#fff" stroke-width="1.500"/></svg>
<div style="left:0px;top:52px;width:1921px;height:75px;background:#f2f2f2;"></div>
<div style="left:0px;top:127px;width:1921px;height:17px;background:#e6e6e6;"></div>
<div style="left:0px;top:143px;width:1921px;height:2px;background:#6e6e6e;"></div>
<div style="left:0px;top:145px;width:1921px;height:1px;background:#d0d0d0;"></div>
<div style="left:0px;top:52px;width:120px;height:25px;background:#4d4d4d;"></div>
<div style="left:0px;top:102px;width:120px;height:25px;background:#e8e8e8;"></div>
<div style="left:0px;top:127px;width:120px;height:16px;background:#f2f2f2;"></div>
<svg class="i" style="left:4.5px;top:55px;color:#fff" width="18" height="18" viewBox="0 0 18 18"><use href="#asm"/></svg>
<span class="t" style="left:26px;top:56.9px;font-size:12.5px;color:#fff;transform:scaleX(0.958);">Сборка</span>
<svg class="i" style="left:5px;top:80.5px;" width="17" height="17" viewBox="0 0 20 20"><use href="#manage"/></svg>
<span class="t" style="left:26px;top:81.9px;font-size:12.5px;transform:scaleX(0.957);">Управление</span>
<svg class="i" style="left:4.5px;top:105px;" width="18" height="18" viewBox="0 0 20 20"><use href="#solid"/></svg>
<span class="t" style="left:26px;top:100.9px;font-size:12.5px;transform:scaleX(0.938);">Твердотельное</span>
<span class="t" style="left:26px;top:111.6px;font-size:12.5px;transform:scaleX(0.966);">моделирование</span>
<svg class="i" style="left:53px;top:128px;" width="14" height="14" viewBox="0 0 20 20"><use href="#chev2"/></svg>
<div style="left:120px;top:53px;width:1px;height:90px;background:#b0b0b0;"></div>
<div style="left:199px;top:53px;width:1px;height:90px;background:#b0b0b0;"></div>
<div style="left:320px;top:53px;width:1px;height:90px;background:#b0b0b0;"></div>
<div style="left:561px;top:53px;width:1px;height:90px;background:#b0b0b0;"></div>
<div style="left:682px;top:53px;width:1px;height:90px;background:#b0b0b0;"></div>
<div style="left:803px;top:53px;width:1px;height:90px;background:#b0b0b0;"></div>
<div style="left:856px;top:53px;width:1px;height:90px;background:#b0b0b0;"></div>
<div style="left:909px;top:53px;width:1px;height:90px;background:#b0b0b0;"></div>
<div style="left:988px;top:53px;width:1px;height:90px;background:#b0b0b0;"></div>
<div style="left:1229px;top:53px;width:1px;height:90px;background:#b0b0b0;"></div>
<div style="left:1470px;top:53px;width:1px;height:90px;background:#b0b0b0;"></div>
<div style="left:1591px;top:53px;width:1px;height:90px;background:#b0b0b0;"></div>
<span class="t" style="left:131.3px;top:128.7px;font-size:11px;color:#2a2a2a;transform:scaleX(0.859);">Системная</span>
<svg class="i" style="left:192.2px;top:131px" width="5" height="9" viewBox="0 0 5 9"><path d="M0 0h1.500v1.500h-1.500zM3 0h1.500v1.500h-1.500zM0 2.500h1.500v1.500h-1.500zM3 2.500h1.500v1.500h-1.500zM0 5h1.500v1.500h-1.500zM3 5h1.500v1.500h-1.500zM0 7.500h1.500v1.500h-1.500zM3 7.500h1.500v1.500h-1.500z" fill="#555"/></svg>
<span class="t" style="left:226.7px;top:128.7px;font-size:11px;color:#2a2a2a;transform:scaleX(0.915);">Компоненты</span>
<svg class="i" style="left:313px;top:131px" width="5" height="9" viewBox="0 0 5 9"><path d="M0 0h1.500v1.500h-1.500zM3 0h1.500v1.500h-1.500zM0 2.500h1.500v1.500h-1.500zM3 2.500h1.500v1.500h-1.500zM0 5h1.500v1.500h-1.500zM3 5h1.500v1.500h-1.500zM0 7.500h1.500v1.500h-1.500zM3 7.500h1.500v1.500h-1.500z" fill="#555"/></svg>
<span class="t" style="left:376.7px;top:128.7px;font-size:11px;color:#2a2a2a;transform:scaleX(0.905);">Размещение компонентов</span>
<svg class="i" style="left:554px;top:131px" width="5" height="9" viewBox="0 0 5 9"><path d="M0 0h1.500v1.500h-1.500zM3 0h1.500v1.500h-1.500zM0 2.500h1.500v1.500h-1.500zM3 2.500h1.500v1.500h-1.500zM0 5h1.500v1.500h-1.500zM3 5h1.500v1.500h-1.500zM0 7.500h1.500v1.500h-1.500zM3 7.500h1.500v1.500h-1.500z" fill="#555"/></svg>
<span class="t" style="left:586.7px;top:128.7px;font-size:11px;color:#2a2a2a;transform:scaleX(0.913);">Операции</span>
<svg class="i" style="left:675px;top:131px" width="5" height="9" viewBox="0 0 5 9"><path d="M0 0h1.500v1.500h-1.500zM3 0h1.500v1.500h-1.500zM0 2.500h1.500v1.500h-1.500zM3 2.500h1.500v1.500h-1.500zM0 5h1.500v1.500h-1.500zM3 5h1.500v1.500h-1.500zM0 7.500h1.500v1.500h-1.500zM3 7.500h1.500v1.500h-1.500z" fill="#555"/></svg>
<span class="t" style="left:688.7px;top:128.7px;font-size:11px;color:#2a2a2a;transform:scaleX(0.920);">Массив, копирование</span>
<svg class="i" style="left:796px;top:131px" width="5" height="9" viewBox="0 0 5 9"><path d="M0 0h1.500v1.500h-1.500zM3 0h1.500v1.500h-1.500zM0 2.500h1.500v1.500h-1.500zM3 2.500h1.500v1.500h-1.500zM0 5h1.500v1.500h-1.500zM3 5h1.500v1.500h-1.500zM0 7.500h1.500v1.500h-1.500zM3 7.500h1.500v1.500h-1.500z" fill="#555"/></svg>
<span class="t" style="left:807.5px;top:128.7px;font-size:11px;color:#2a2a2a;transform:scaleX(0.869);">Вспом...</span>
<svg class="i" style="left:849px;top:131px" width="5" height="9" viewBox="0 0 5 9"><path d="M0 0h1.500v1.500h-1.500zM3 0h1.500v1.500h-1.500zM0 2.500h1.500v1.500h-1.500zM3 2.500h1.500v1.500h-1.500zM0 5h1.500v1.500h-1.500zM3 5h1.500v1.500h-1.500zM0 7.500h1.500v1.500h-1.500zM3 7.500h1.500v1.500h-1.500z" fill="#555"/></svg>
<span class="t" style="left:860.8px;top:128.7px;font-size:11px;color:#2a2a2a;transform:scaleX(0.754);">Раз...</span>
<svg class="i" style="left:902px;top:131px" width="5" height="9" viewBox="0 0 5 9"><path d="M0 0h1.500v1.500h-1.500zM3 0h1.500v1.500h-1.500zM0 2.500h1.500v1.500h-1.500zM3 2.500h1.500v1.500h-1.500zM0 5h1.500v1.500h-1.500zM3 5h1.500v1.500h-1.500zM0 7.500h1.500v1.500h-1.500zM3 7.500h1.500v1.500h-1.500z" fill="#555"/></svg>
<span class="t" style="left:913.3px;top:128.7px;font-size:11px;color:#2a2a2a;transform:scaleX(0.900);">Обознач...</span>
<svg class="i" style="left:981px;top:131px" width="5" height="9" viewBox="0 0 5 9"><path d="M0 0h1.500v1.500h-1.500zM3 0h1.500v1.500h-1.500zM0 2.500h1.500v1.500h-1.500zM3 2.500h1.500v1.500h-1.500zM0 5h1.500v1.500h-1.500zM3 5h1.500v1.500h-1.500zM0 7.500h1.500v1.500h-1.500zM3 7.500h1.500v1.500h-1.500z" fill="#555"/></svg>
<span class="t" style="left:1075.3px;top:128.7px;font-size:11px;color:#2a2a2a;transform:scaleX(0.916);">Диагностика</span>
<svg class="i" style="left:1222px;top:131px" width="5" height="9" viewBox="0 0 5 9"><path d="M0 0h1.500v1.500h-1.500zM3 0h1.500v1.500h-1.500zM0 2.500h1.500v1.500h-1.500zM3 2.500h1.500v1.500h-1.500zM0 5h1.500v1.500h-1.500zM3 5h1.500v1.500h-1.500zM0 7.500h1.500v1.500h-1.500zM3 7.500h1.500v1.500h-1.500z" fill="#555"/></svg>
<span class="t" style="left:1292.7px;top:128.7px;font-size:11px;color:#2a2a2a;transform:scaleX(0.895);">Чертеж, спецификация</span>
<svg class="i" style="left:1463px;top:131px" width="5" height="9" viewBox="0 0 5 9"><path d="M0 0h1.500v1.500h-1.500zM3 0h1.500v1.500h-1.500zM0 2.500h1.500v1.500h-1.500zM3 2.500h1.500v1.500h-1.500zM0 5h1.500v1.500h-1.500zM3 5h1.500v1.500h-1.500zM0 7.500h1.500v1.500h-1.500zM3 7.500h1.500v1.500h-1.500z" fill="#555"/></svg>
<span class="t" style="left:1478.2px;top:128.7px;font-size:11px;color:#2a2a2a;transform:scaleX(0.859);">Стандартные изделия</span>
<svg class="i" style="left:1584px;top:131px" width="5" height="9" viewBox="0 0 5 9"><path d="M0 0h1.500v1.500h-1.500zM3 0h1.500v1.500h-1.500zM0 2.500h1.500v1.500h-1.500zM3 2.500h1.500v1.500h-1.500zM0 5h1.500v1.500h-1.500zM3 5h1.500v1.500h-1.500zM0 7.500h1.500v1.500h-1.500zM3 7.500h1.500v1.500h-1.500z" fill="#555"/></svg>
<svg class="i" style="left:658.5px;top:133.5px" width="9" height="5" viewBox="0 0 9 5"><path d="M0 0h9l-4.500 5z" fill="#222"/></svg>
<svg class="i" style="left:885.5px;top:133.5px" width="9" height="5" viewBox="0 0 9 5"><path d="M0 0h9l-4.500 5z" fill="#222"/></svg>
<svg class="i" style="left:964.5px;top:133.5px" width="9" height="5" viewBox="0 0 9 5"><path d="M0 0h9l-4.500 5z" fill="#222"/></svg>
<svg class="i" style="left:124px;top:54px;" width="20" height="20" viewBox="0 0 20 20"><use href="#new"/></svg>
<svg class="i" style="left:150px;top:53.5px;" width="20" height="20" viewBox="0 0 20 20"><use href="#open"/></svg>
<svg class="i" style="left:176px;top:54px;color:#c4c4c4" width="20" height="20" viewBox="0 0 20 20"><use href="#save"/></svg>
<svg class="i" style="left:124px;top:79px;" width="20" height="20" viewBox="0 0 20 20"><use href="#print"/></svg>
<svg class="i" style="left:150px;top:79px;" width="20" height="20" viewBox="0 0 20 20"><use href="#preview"/></svg>
<svg class="i" style="left:176px;top:79px;" width="20" height="20" viewBox="0 0 20 20"><use href="#saveas"/></svg>
<svg class="i" style="left:124px;top:104px;" width="20" height="20" viewBox="0 0 20 20"><use href="#undo"/></svg>
<svg class="i" style="left:150px;top:104px;color:#c8c8c8" width="20" height="20" viewBox="0 0 20 20"><use href="#redo"/></svg>
<svg class="i" style="left:203px;top:54px;" width="20" height="20" viewBox="0 0 20 20"><use href="#addcomp"/></svg>
<span class="t" style="left:226.3px;top:51.4px;font-size:12.5px;transform:scaleX(0.936);">Добавить</span>
<span class="t" style="left:226.3px;top:62.2px;font-size:12.5px;transform:scaleX(0.957);">компонент из...</span>
<svg class="i" style="left:203px;top:79px;" width="20" height="20" viewBox="0 0 20 20"><use href="#newpart"/></svg>
<span class="t" style="left:226.3px;top:81.4px;font-size:12.5px;transform:scaleX(0.896);">Создать деталь</span>
<svg class="i" style="left:203px;top:104px;" width="20" height="20" viewBox="0 0 20 20"><use href="#mirror"/></svg>
<span class="t" style="left:226.3px;top:101.4px;font-size:12.5px;transform:scaleX(0.948);">Зеркальное</span>
<span class="t" style="left:226.3px;top:112.2px;font-size:12.5px;transform:scaleX(0.947);">отражение ко...</span>
<svg class="i" style="left:324px;top:54px;" width="20" height="20" viewBox="0 0 20 20"><use href="#coincide"/></svg>
<span class="t" style="left:347.7px;top:56.4px;font-size:12.5px;transform:scaleX(0.918);">Совпадение</span>
<svg class="i" style="left:324px;top:79px;color:#c0c0c0" width="20" height="20" viewBox="0 0 20 20"><use href="#fixon"/></svg>
<span class="t" style="left:347.7px;top:76.4px;font-size:12.5px;color:#c0c0c0;transform:scaleX(0.968);">Включить</span>
<span class="t" style="left:347.7px;top:87.2px;font-size:12.5px;color:#c0c0c0;transform:scaleX(0.961);">фиксацию</span>
<svg class="i" style="left:324px;top:104px;" width="20" height="20" viewBox="0 0 20 20"><use href="#movecomp"/></svg>
<span class="t" style="left:347.7px;top:101.4px;font-size:12.5px;transform:scaleX(0.931);">Переместить</span>
<span class="t" style="left:347.7px;top:112.2px;font-size:12.5px;transform:scaleX(0.983);">компонент</span>
<svg class="i" style="left:444px;top:54px;" width="20" height="20" viewBox="0 0 20 20"><use href="#rotrot"/></svg>
<span class="t" style="left:467.5px;top:51.4px;font-size:12.5px;transform:scaleX(0.945);">Вращение-</span>
<span class="t" style="left:467.5px;top:62.2px;font-size:12.5px;transform:scaleX(0.949);">вращение</span>
<svg class="i" style="left:444px;top:79px;color:#c0c0c0" width="20" height="20" viewBox="0 0 20 20"><use href="#fixoff"/></svg>
<span class="t" style="left:467.5px;top:76.4px;font-size:12.5px;color:#c0c0c0;transform:scaleX(0.973);">Отключить</span>
<span class="t" style="left:467.5px;top:87.2px;font-size:12.5px;color:#c0c0c0;transform:scaleX(0.960);">фиксацию</span>
<svg class="i" style="left:565px;top:54px;" width="20" height="20" viewBox="0 0 20 20"><use href="#hole"/></svg>
<span class="t" style="left:588.7px;top:51.4px;font-size:12.5px;transform:scaleX(0.912);">Отверстие</span>
<span class="t" style="left:588.7px;top:62.2px;font-size:12.5px;transform:scaleX(0.954);">простое</span>
<svg class="i" style="left:565px;top:79px;" width="20" height="20" viewBox="0 0 20 20"><use href="#cutext"/></svg>
<span class="t" style="left:588.7px;top:76.4px;font-size:12.5px;transform:scaleX(0.892);">Вырезать</span>
<span class="t" style="left:588.7px;top:87.2px;font-size:12.5px;transform:scaleX(0.933);">выдавливанием</span>
<svg class="i" style="left:565px;top:104px;" width="20" height="20" viewBox="0 0 20 20"><use href="#section"/></svg>
<span class="t" style="left:588.7px;top:106.4px;font-size:12.5px;transform:scaleX(0.928);">Сечение</span>
<svg class="i" style="left:686px;top:54px;" width="20" height="20" viewBox="0 0 20 20"><use href="#gridarr"/></svg>
<span class="t" style="left:709.7px;top:56.4px;font-size:12.5px;transform:scaleX(0.947);">Массив по сетке</span>
<svg class="i" style="left:686px;top:79px;" width="20" height="20" viewBox="0 0 20 20"><use href="#copyobj"/></svg>
<span class="t" style="left:709.7px;top:76.4px;font-size:12.5px;transform:scaleX(0.951);">Копировать</span>
<span class="t" style="left:709.7px;top:87.2px;font-size:12.5px;transform:scaleX(0.935);">объекты</span>
<svg class="i" style="left:686px;top:104px;" width="20" height="20" viewBox="0 0 20 20"><use href="#collgeom"/></svg>
<span class="t" style="left:709.7px;top:101.4px;font-size:12.5px;transform:scaleX(0.947);">Коллекция</span>
<span class="t" style="left:709.7px;top:112.2px;font-size:12.5px;transform:scaleX(0.955);">геометрии</span>
<svg class="i" style="left:807px;top:54px;" width="20" height="20" viewBox="0 0 20 20"><use href="#lcs"/></svg>
<svg class="i" style="left:833px;top:54px;" width="20" height="20" viewBox="0 0 20 20"><use href="#ctrlpt"/></svg>
<svg class="i" style="left:807px;top:79px;" width="20" height="20" viewBox="0 0 20 20"><use href="#offplane"/></svg>
<svg class="i" style="left:833px;top:79px;" width="20" height="20" viewBox="0 0 20 20"><use href="#compplace"/></svg>
<svg class="i" style="left:807px;top:104px;" width="20" height="20" viewBox="0 0 20 20"><use href="#lineseg"/></svg>
<svg class="i" style="left:860px;top:54px;" width="20" height="20" viewBox="0 0 20 20"><use href="#dimlin"/></svg>
<svg class="i" style="left:886px;top:54px;" width="20" height="20" viewBox="0 0 20 20"><use href="#dimdia"/></svg>
<svg class="i" style="left:860px;top:79px;" width="20" height="20" viewBox="0 0 20 20"><use href="#dimang"/></svg>
<svg class="i" style="left:886px;top:79px;" width="20" height="20" viewBox="0 0 20 20"><use href="#dimrad"/></svg>
<svg class="i" style="left:860px;top:104px;" width="20" height="20" viewBox="0 0 20 20"><use href="#dimsk"/></svg>
<svg class="i" style="left:886px;top:104px;" width="20" height="20" viewBox="0 0 20 20"><use href="#dimedge"/></svg>
<svg class="i" style="left:913px;top:54px;" width="20" height="20" viewBox="0 0 20 20"><use href="#thread"/></svg>
<svg class="i" style="left:939px;top:54px;" width="20" height="20" viewBox="0 0 20 20"><use href="#axisline"/></svg>
<svg class="i" style="left:965px;top:54px;" width="20" height="20" viewBox="0 0 20 20"><use href="#leader1"/></svg>
<svg class="i" style="left:913px;top:79px;" width="20" height="20" viewBox="0 0 20 20"><use href="#rough"/></svg>
<svg class="i" style="left:939px;top:79px;" width="20" height="20" viewBox="0 0 20 20"><use href="#rough2"/></svg>
<svg class="i" style="left:965px;top:79px;" width="20" height="20" viewBox="0 0 20 20"><use href="#base"/></svg>
<svg class="i" style="left:913px;top:104px;" width="20" height="20" viewBox="0 0 20 20"><use href="#tol"/></svg>
<svg class="i" style="left:939px;top:104px;" width="20" height="20" viewBox="0 0 20 20"><use href="#mark"/></svg>
<svg class="i" style="left:965px;top:104px;" width="20" height="20" viewBox="0 0 20 20"><use href="#textT"/></svg>
<svg class="i" style="left:992px;top:54px;" width="20" height="20" viewBox="0 0 20 20"><use href="#info"/></svg>
<span class="t" style="left:1015.5px;top:51.4px;font-size:12.5px;transform:scaleX(0.959);">Информация об</span>
<span class="t" style="left:1015.5px;top:62.2px;font-size:12.5px;transform:scaleX(0.927);">объекте</span>
<svg class="i" style="left:992px;top:79px;" width="20" height="20" viewBox="0 0 20 20"><use href="#mcx"/></svg>
<span class="t" style="left:1015.5px;top:81.4px;font-size:12.5px;transform:scaleX(0.946);">МЦХ модели</span>
<svg class="i" style="left:992px;top:104px;" width="20" height="20" viewBox="0 0 20 20"><use href="#curv"/></svg>
<span class="t" style="left:1015.5px;top:101.4px;font-size:12.5px;transform:scaleX(0.943);">График</span>
<span class="t" style="left:1015.5px;top:112.2px;font-size:12.5px;transform:scaleX(0.966);">кривизны</span>
<svg class="i" style="left:1112px;top:54px;" width="20" height="20" viewBox="0 0 20 20"><use href="#dist"/></svg>
<span class="t" style="left:1135.3px;top:51.4px;font-size:12.5px;transform:scaleX(0.926);">Расстояние и</span>
<span class="t" style="left:1135.3px;top:62.2px;font-size:12.5px;transform:scaleX(0.995);">угол</span>
<svg class="i" style="left:1112px;top:79px;" width="20" height="20" viewBox="0 0 20 20"><use href="#collis"/></svg>
<span class="t" style="left:1135.3px;top:76.4px;font-size:12.5px;transform:scaleX(0.946);">Проверка</span>
<span class="t" style="left:1135.3px;top:87.2px;font-size:12.5px;transform:scaleX(0.984);">коллизий</span>
<svg class="i" style="left:1112px;top:104px;" width="20" height="20" viewBox="0 0 20 20"><use href="#contin"/></svg>
<span class="t" style="left:1135.3px;top:101.4px;font-size:12.5px;transform:scaleX(0.946);">Проверка</span>
<span class="t" style="left:1135.3px;top:112.2px;font-size:12.5px;transform:scaleX(0.961);">непрерывности</span>
<svg class="i" style="left:1233px;top:54px;" width="20" height="20" viewBox="0 0 20 20"><use href="#mkdraw"/></svg>
<span class="t" style="left:1256.7px;top:51.4px;font-size:12.5px;transform:scaleX(0.928);">Создать чертеж</span>
<span class="t" style="left:1256.7px;top:62.2px;font-size:12.5px;transform:scaleX(0.952);">по модели</span>
<svg class="i" style="left:1233px;top:79px;" width="20" height="20" viewBox="0 0 20 20"><use href="#mngdraw"/></svg>
<span class="t" style="left:1256.7px;top:76.4px;font-size:12.5px;transform:scaleX(0.940);">Управление</span>
<span class="t" style="left:1256.7px;top:87.2px;font-size:12.5px;transform:scaleX(0.945);">связанными ч...</span>
<svg class="i" style="left:1353px;top:54px;" width="20" height="20" viewBox="0 0 20 20"><use href="#mkspec"/></svg>
<span class="t" style="left:1376.3px;top:51.4px;font-size:12.5px;transform:scaleX(0.888);">Создать</span>
<span class="t" style="left:1376.3px;top:62.2px;font-size:12.5px;transform:scaleX(0.942);">спецификаци...</span>
<svg class="i" style="left:1353px;top:79px;" width="20" height="20" viewBox="0 0 20 20"><use href="#mngspec"/></svg>
<span class="t" style="left:1376.3px;top:76.4px;font-size:12.5px;transform:scaleX(0.945);">Управление</span>
<span class="t" style="left:1376.3px;top:87.2px;font-size:12.5px;transform:scaleX(0.938);">связанными с...</span>
<svg class="i" style="left:1474px;top:54px;" width="20" height="20" viewBox="0 0 20 20"><use href="#insel"/></svg>
<span class="t" style="left:1497.6px;top:51.4px;font-size:12.5px;transform:scaleX(0.885);">Вставить</span>
<span class="t" style="left:1497.6px;top:62.2px;font-size:12.5px;transform:scaleX(0.925);">элемент</span>
<svg class="i" style="left:1474px;top:79px;" width="20" height="20" viewBox="0 0 20 20"><use href="#findrep"/></svg>
<span class="t" style="left:1497.6px;top:76.4px;font-size:12.5px;transform:scaleX(0.930);">Найти и</span>
<span class="t" style="left:1497.6px;top:87.2px;font-size:12.5px;transform:scaleX(0.918);">заменить</span>
<svg class="i" style="left:1474px;top:104px;" width="20" height="20" viewBox="0 0 20 20"><use href="#updref"/></svg>
<span class="t" style="left:1497.6px;top:101.4px;font-size:12.5px;transform:scaleX(0.933);">Обновить</span>
<span class="t" style="left:1497.6px;top:112.2px;font-size:12.5px;transform:scaleX(0.945);">ссылки на мод...</span>
<div style="left:0px;top:145px;width:27px;height:896px;background:#c8c8c8;"></div>
<div style="left:0px;top:145px;width:26px;height:25px;background:#4d4d4d;"></div>
<div style="left:0px;top:170px;width:26px;height:75px;background:#f2f2f2;"></div>
<div style="left:26px;top:145px;width:1px;height:896px;background:#9a9a9a;"></div>
<svg class="i" style="left:2.5px;top:147px;color:#fff" width="20" height="20" viewBox="0 0 20 20"><use href="#tree"/></svg>
<svg class="i" style="left:2.5px;top:172px;" width="20" height="20" viewBox="0 0 20 20"><use href="#checkl"/></svg>
<svg class="i" style="left:2.5px;top:197px;" width="20" height="20" viewBox="0 0 20 20"><use href="#fx"/></svg>
<svg class="i" style="left:3.5px;top:223px;" width="18" height="18" viewBox="0 0 20 20"><use href="#bars"/></svg>
<div style="left:27px;top:145px;width:401px;height:896px;background:#f2f2f2;overflow:hidden" id="tp">
<div style="left:0px;top:0px;width:401px;height:16px;background:#c8c8c8;"></div>
<span class="t" style="left:3.2px;top:0.2px;font-size:12.5px;transform:scaleX(0.909);">Дерево: структура</span>
<svg class="i" style="left:385px;top:1.5px;" width="13" height="13" viewBox="0 0 20 20"><use href="#gear"/></svg>
<div style="left:0px;top:16px;width:401px;height:1px;background:#9a9a9a;"></div>
<div style="left:26px;top:17px;width:26px;height:25px;background:#4d4d4d;"></div>
<svg class="i" style="left:3px;top:19px;" width="20" height="20" viewBox="0 0 20 20"><use href="#tb1"/></svg>
<svg class="i" style="left:28.5px;top:19px;color:#fff" width="20" height="20" viewBox="0 0 20 20"><use href="#tb2"/></svg>
<svg class="i" style="left:55px;top:19px;" width="20" height="20" viewBox="0 0 20 20"><use href="#tb3"/></svg>
<svg class="i" style="left:81px;top:19px;" width="20" height="20" viewBox="0 0 20 20"><use href="#tb4"/></svg>
<svg class="i" style="left:109.5px;top:19px;" width="20" height="20" viewBox="0 0 20 20"><use href="#tb5"/></svg>
<div style="left:105px;top:17px;width:1px;height:25px;background:#333;"></div>
<svg class="i" style="left:139.5px;top:25.5px" width="9" height="5" viewBox="0 0 9 5"><path d="M0 0h9l-4.500 5z" fill="#222"/></svg>
<div style="left:0px;top:42px;width:401px;height:1.5px;background:#111;"></div>
<div style="left:26px;top:43.5px;width:375px;height:25px;background:#fff;"></div>
<svg class="i" style="left:4.5px;top:46.5px;" width="17" height="17" viewBox="0 0 20 20"><use href="#filter"/></svg>
<svg class="i" style="left:31px;top:47.5px;color:#a6a6a6" width="15" height="15" viewBox="0 0 20 20"><use href="#mag"/></svg>
<span class="t" style="left:50px;top:47.2px;font-size:13.5px;color:#a8a8a8;transform:scaleX(0.930);">Поиск (Ctrl+/)</span>
<div style="left:0px;top:68px;width:401px;height:1.5px;background:#555;"></div>
<div style="left:0px;top:69.5px;width:401px;height:1.5px;background:#bdbdbd;"></div>
<div style="left:0px;top:71px;width:52px;height:571.5px;background:#e6e6e6;"></div>
<div style="left:0px;top:96.5px;width:52px;height:1px;background:#c4c4c4;"></div>
<div style="left:52px;top:96.5px;width:349px;height:1px;background:#e2e2e2;"></div>
<div style="left:0px;top:122.5px;width:52px;height:1px;background:#c4c4c4;"></div>
<div style="left:52px;top:122.5px;width:349px;height:1px;background:#e2e2e2;"></div>
<div style="left:0px;top:148.5px;width:52px;height:1px;background:#c4c4c4;"></div>
<div style="left:52px;top:148.5px;width:349px;height:1px;background:#e2e2e2;"></div>
<div style="left:0px;top:174.5px;width:52px;height:1px;background:#c4c4c4;"></div>
<div style="left:52px;top:174.5px;width:349px;height:1px;background:#e2e2e2;"></div>
<div style="left:0px;top:200.5px;width:52px;height:1px;background:#c4c4c4;"></div>
<div style="left:52px;top:200.5px;width:349px;height:1px;background:#e2e2e2;"></div>
<div style="left:0px;top:226.5px;width:52px;height:1px;background:#c4c4c4;"></div>
<div style="left:52px;top:226.5px;width:349px;height:1px;background:#e2e2e2;"></div>
<div style="left:0px;top:252.5px;width:52px;height:1px;background:#c4c4c4;"></div>
<div style="left:52px;top:252.5px;width:349px;height:1px;background:#e2e2e2;"></div>
<div style="left:0px;top:278.5px;width:52px;height:1px;background:#c4c4c4;"></div>
<div style="left:52px;top:278.5px;width:349px;height:1px;background:#e2e2e2;"></div>
<div style="left:0px;top:304.5px;width:52px;height:1px;background:#c4c4c4;"></div>
<div style="left:52px;top:304.5px;width:349px;height:1px;background:#e2e2e2;"></div>
<div style="left:0px;top:330.5px;width:52px;height:1px;background:#c4c4c4;"></div>
<div style="left:52px;top:330.5px;width:349px;height:1px;background:#e2e2e2;"></div>
<div style="left:0px;top:356.5px;width:52px;height:1px;background:#c4c4c4;"></div>
<div style="left:52px;top:356.5px;width:349px;height:1px;background:#e2e2e2;"></div>
<div style="left:0px;top:382.5px;width:52px;height:1px;background:#c4c4c4;"></div>
<div style="left:52px;top:382.5px;width:349px;height:1px;background:#e2e2e2;"></div>
<div style="left:0px;top:408.5px;width:52px;height:1px;background:#c4c4c4;"></div>
<div style="left:52px;top:408.5px;width:349px;height:1px;background:#e2e2e2;"></div>
<div style="left:0px;top:434.5px;width:52px;height:1px;background:#c4c4c4;"></div>
<div style="left:52px;top:434.5px;width:349px;height:1px;background:#e2e2e2;"></div>
<div style="left:0px;top:460.5px;width:52px;height:1px;background:#c4c4c4;"></div>
<div style="left:52px;top:460.5px;width:349px;height:1px;background:#e2e2e2;"></div>
<div style="left:0px;top:486.5px;width:52px;height:1px;background:#c4c4c4;"></div>
<div style="left:52px;top:486.5px;width:349px;height:1px;background:#e2e2e2;"></div>
<div style="left:0px;top:512.5px;width:52px;height:1px;background:#c4c4c4;"></div>
<div style="left:52px;top:512.5px;width:349px;height:1px;background:#e2e2e2;"></div>
<div style="left:0px;top:538.5px;width:52px;height:1px;background:#c4c4c4;"></div>
<div style="left:52px;top:538.5px;width:349px;height:1px;background:#e2e2e2;"></div>
<div style="left:0px;top:564.5px;width:52px;height:1px;background:#c4c4c4;"></div>
<div style="left:52px;top:564.5px;width:349px;height:1px;background:#e2e2e2;"></div>
<div style="left:0px;top:590.5px;width:52px;height:1px;background:#c4c4c4;"></div>
<div style="left:52px;top:590.5px;width:349px;height:1px;background:#e2e2e2;"></div>
<div style="left:0px;top:616.5px;width:52px;height:1px;background:#c4c4c4;"></div>
<div style="left:52px;top:616.5px;width:349px;height:1px;background:#e2e2e2;"></div>
<div style="left:0px;top:642.5px;width:52px;height:1px;background:#c4c4c4;"></div>
<div style="left:52px;top:642.5px;width:349px;height:1px;background:#e2e2e2;"></div>
<div style="left:0px;top:670.5px;width:401px;height:1px;background:#dcdcdc;"></div>
<div style="left:52px;top:70.5px;width:349px;height:1.2px;background:#3cc0e0;"></div>
<div style="left:52px;top:96.19999999999999px;width:349px;height:1.2px;background:#3cc0e0;"></div>
<svg class="i" style="left:64.5px;top:81.0px" width="7" height="5" viewBox="0 0 7 5"><path d="M0 0h7l-3.500 5z" fill="#222"/></svg>
<svg class="i" style="left:75px;top:74.5px;" width="17" height="17" viewBox="0 0 18 18"><use href="#asm"/></svg>
<span class="t" style="left:95.2px;top:76.0px;font-size:12.5px;transform:scaleX(0.780);">(+)</span>
<span class="t" style="left:109.5px;top:76.0px;font-size:12.5px;transform:scaleX(0.930);">4997.00.00.000 Кран мостовой электрический литейный</span>
<svg class="i" style="left:5px;top:101.5px;" width="16" height="16" viewBox="0 0 20 20"><use href="#eyeoff"/></svg>
<svg class="i" style="left:87.5px;top:99.5px;color:#808080" width="17" height="17" viewBox="0 0 20 20"><use href="#tech"/></svg>
<span class="t" style="left:104.5px;top:101.8px;font-size:12.5px;color:#808080;transform:scaleX(0.947);">Технические требования</span>
<svg class="i" style="left:75.5px;top:132.5px" width="5" height="7" viewBox="0 0 5 7"><path d="M0 0v7l5-3.500z" fill="#222"/></svg>
<svg class="i" style="left:86.5px;top:126.5px;color:#808080" width="17" height="17" viewBox="0 0 20 20"><use href="#cs"/></svg>
<span class="t" style="left:104.5px;top:127.8px;font-size:12.5px;color:#808080;transform:scaleX(0.956);">Системы координат</span>
<svg class="i" style="left:5.5px;top:153.5px;" width="15" height="15" viewBox="0 0 20 20"><use href="#eye"/></svg>
<svg class="i" style="left:31.5px;top:154px;" width="15" height="15" viewBox="0 0 20 20"><use href="#elem"/></svg>
<svg class="i" style="left:74.5px;top:159.0px" width="7" height="5" viewBox="0 0 7 5"><path d="M0 0h7l-3.500 5z" fill="#222"/></svg>
<svg class="i" style="left:85.5px;top:152.5px;" width="17" height="17" viewBox="0 0 20 20"><use href="#comps"/></svg>
<span class="t" style="left:104.5px;top:153.8px;font-size:12.5px;transform:scaleX(0.975);">Компоненты</span>
<svg class="i" style="left:5.5px;top:179.5px;" width="15" height="15" viewBox="0 0 20 20"><use href="#eye"/></svg>
<svg class="i" style="left:31.5px;top:180px;" width="15" height="15" viewBox="0 0 20 20"><use href="#elem"/></svg>
<svg class="i" style="left:85.5px;top:184.0px" width="5" height="7" viewBox="0 0 5 7"><path d="M0 0v7l5-3.500z" fill="#222"/></svg>
<svg class="i" style="left:95px;top:178.5px;" width="17" height="17" viewBox="0 0 18 18"><use href="#asm"/></svg>
<span class="t" style="left:115px;top:179.8px;font-size:12.5px;transform:scaleX(0.780);">(+)</span>
<span class="t" style="left:129px;top:179.8px;font-size:12.5px;transform:scaleX(0.930);">4997.01.00.000 Металлоконструкция крана</span>
<svg class="i" style="left:5.5px;top:205.5px;" width="15" height="15" viewBox="0 0 20 20"><use href="#eye"/></svg>
<svg class="i" style="left:31.5px;top:206px;" width="15" height="15" viewBox="0 0 20 20"><use href="#elem"/></svg>
<svg class="i" style="left:85.5px;top:210.0px" width="5" height="7" viewBox="0 0 5 7"><path d="M0 0v7l5-3.500z" fill="#222"/></svg>
<svg class="i" style="left:95px;top:204.5px;" width="17" height="17" viewBox="0 0 18 18"><use href="#asm"/></svg>
<svg class="i" style="left:115px;top:207px;" width="13" height="13" viewBox="0 0 20 20"><use href="#pin"/></svg>
<span class="t" style="left:129px;top:205.8px;font-size:12.5px;transform:scaleX(0.925);">4997.20.00.000 Механизм передвижения крана</span>
<svg class="i" style="left:5.5px;top:231.5px;" width="15" height="15" viewBox="0 0 20 20"><use href="#eye"/></svg>
<svg class="i" style="left:31.5px;top:232px;" width="15" height="15" viewBox="0 0 20 20"><use href="#elem"/></svg>
<svg class="i" style="left:85.5px;top:236.0px" width="5" height="7" viewBox="0 0 5 7"><path d="M0 0v7l5-3.500z" fill="#222"/></svg>
<svg class="i" style="left:95px;top:230.5px;" width="17" height="17" viewBox="0 0 18 18"><use href="#asm"/></svg>
<svg class="i" style="left:114.3px;top:232.5px;" width="14" height="14" viewBox="0 0 20 20"><use href="#grid4"/></svg>
<span class="t" style="left:130.3px;top:231.8px;font-size:12.5px;transform:scaleX(0.780);">(+)</span>
<span class="t" style="left:144.3px;top:231.8px;font-size:12.5px;transform:scaleX(0.914);">4997.11.00.000 Тележка г.п. 50/16т</span>
<svg class="i" style="left:5.5px;top:257.5px;" width="15" height="15" viewBox="0 0 20 20"><use href="#eye"/></svg>
<svg class="i" style="left:31.5px;top:258px;" width="15" height="15" viewBox="0 0 20 20"><use href="#elem"/></svg>
<svg class="i" style="left:85.5px;top:262.0px" width="5" height="7" viewBox="0 0 5 7"><path d="M0 0v7l5-3.500z" fill="#222"/></svg>
<svg class="i" style="left:95px;top:256.5px;" width="17" height="17" viewBox="0 0 18 18"><use href="#asm"/></svg>
<svg class="i" style="left:114.3px;top:258.5px;" width="14" height="14" viewBox="0 0 20 20"><use href="#grid4"/></svg>
<span class="t" style="left:130.3px;top:257.8px;font-size:12.5px;transform:scaleX(0.780);">(+)</span>
<span class="t" style="left:144.3px;top:257.8px;font-size:12.5px;transform:scaleX(0.902);">4997.10.00.000 Тележка г.п. 200т</span>
<svg class="i" style="left:5.5px;top:283.5px;" width="15" height="15" viewBox="0 0 20 20"><use href="#eye"/></svg>
<svg class="i" style="left:31.5px;top:284px;" width="15" height="15" viewBox="0 0 20 20"><use href="#elem"/></svg>
<svg class="i" style="left:85.5px;top:288.0px" width="5" height="7" viewBox="0 0 5 7"><path d="M0 0v7l5-3.500z" fill="#222"/></svg>
<svg class="i" style="left:95px;top:282.5px;" width="17" height="17" viewBox="0 0 18 18"><use href="#asm"/></svg>
<svg class="i" style="left:114.3px;top:284.5px;" width="14" height="14" viewBox="0 0 20 20"><use href="#grid4"/></svg>
<span class="t" style="left:130.3px;top:283.8px;font-size:12.5px;transform:scaleX(0.780);">(+)</span>
<span class="t" style="left:144.3px;top:283.8px;font-size:12.5px;transform:scaleX(0.913);">4997.30.00.000 Токоподвод к тележке г_п 200 т</span>
<svg class="i" style="left:5.5px;top:309.5px;" width="15" height="15" viewBox="0 0 20 20"><use href="#eye"/></svg>
<svg class="i" style="left:31.5px;top:310px;" width="15" height="15" viewBox="0 0 20 20"><use href="#elem"/></svg>
<svg class="i" style="left:85.5px;top:314.0px" width="5" height="7" viewBox="0 0 5 7"><path d="M0 0v7l5-3.500z" fill="#222"/></svg>
<svg class="i" style="left:95px;top:308.5px;" width="17" height="17" viewBox="0 0 18 18"><use href="#asm"/></svg>
<svg class="i" style="left:115px;top:311px;" width="13" height="13" viewBox="0 0 20 20"><use href="#pin"/></svg>
<span class="t" style="left:129px;top:309.8px;font-size:12.5px;transform:scaleX(0.929);">4997.31.00.000 Токоподвод к тележке г.п 50/16т</span>
<svg class="i" style="left:5.5px;top:335.5px;" width="15" height="15" viewBox="0 0 20 20"><use href="#eye"/></svg>
<svg class="i" style="left:31.5px;top:336px;" width="15" height="15" viewBox="0 0 20 20"><use href="#elem"/></svg>
<svg class="i" style="left:85.5px;top:340.0px" width="5" height="7" viewBox="0 0 5 7"><path d="M0 0v7l5-3.500z" fill="#222"/></svg>
<svg class="i" style="left:95px;top:334.5px;" width="17" height="17" viewBox="0 0 18 18"><use href="#asm"/></svg>
<span class="t" style="left:115px;top:335.8px;font-size:12.5px;transform:scaleX(0.780);">(+)</span>
<span class="t" style="left:129px;top:335.8px;font-size:12.5px;transform:scaleX(0.930);">2794.00.000 Ковш сталеразливочный КС-130</span>
<svg class="i" style="left:5.5px;top:361.5px;" width="15" height="15" viewBox="0 0 20 20"><use href="#eye"/></svg>
<svg class="i" style="left:31.5px;top:362px;" width="15" height="15" viewBox="0 0 20 20"><use href="#elem"/></svg>
<svg class="i" style="left:85.5px;top:366.0px" width="5" height="7" viewBox="0 0 5 7"><path d="M0 0v7l5-3.500z" fill="#222"/></svg>
<svg class="i" style="left:95px;top:360.5px;" width="17" height="17" viewBox="0 0 18 18"><use href="#asm"/></svg>
<span class="t" style="left:115px;top:361.8px;font-size:12.5px;transform:scaleX(0.780);">(+)</span>
<span class="t" style="left:129px;top:361.8px;font-size:12.5px;transform:scaleX(0.923);">4997.50.00.000 Установка кабины управления</span>
<svg class="i" style="left:5.5px;top:387.5px;" width="15" height="15" viewBox="0 0 20 20"><use href="#eye"/></svg>
<svg class="i" style="left:31.5px;top:388px;" width="15" height="15" viewBox="0 0 20 20"><use href="#elem"/></svg>
<svg class="i" style="left:85.5px;top:392.0px" width="5" height="7" viewBox="0 0 5 7"><path d="M0 0v7l5-3.500z" fill="#222"/></svg>
<svg class="i" style="left:95px;top:386.5px;" width="17" height="17" viewBox="0 0 18 18"><use href="#asm"/></svg>
<span class="t" style="left:115px;top:387.8px;font-size:12.5px;transform:scaleX(0.780);">(+)</span>
<span class="t" style="left:129px;top:387.8px;font-size:12.5px;transform:scaleX(0.914);">4997.02.00.000 СБ Установка таблички</span>
<svg class="i" style="left:5.5px;top:413.5px;" width="15" height="15" viewBox="0 0 20 20"><use href="#eye"/></svg>
<svg class="i" style="left:31.5px;top:414px;" width="15" height="15" viewBox="0 0 20 20"><use href="#elem"/></svg>
<svg class="i" style="left:85.5px;top:418.0px" width="5" height="7" viewBox="0 0 5 7"><path d="M0 0v7l5-3.500z" fill="#222"/></svg>
<svg class="i" style="left:95px;top:412.5px;" width="17" height="17" viewBox="0 0 18 18"><use href="#asm"/></svg>
<span class="t" style="left:115px;top:413.8px;font-size:12.5px;transform:scaleX(0.780);">(+)</span>
<span class="t" style="left:129px;top:413.8px;font-size:12.5px;transform:scaleX(0.930);">4997.27.00.000 Установка линеек, буферов и концевых</span>
<svg class="i" style="left:5.5px;top:439.5px;" width="15" height="15" viewBox="0 0 20 20"><use href="#eye"/></svg>
<svg class="i" style="left:31.5px;top:440px;" width="15" height="15" viewBox="0 0 20 20"><use href="#elem"/></svg>
<svg class="i" style="left:85.5px;top:444.0px" width="5" height="7" viewBox="0 0 5 7"><path d="M0 0v7l5-3.500z" fill="#222"/></svg>
<svg class="i" style="left:95px;top:438.5px;" width="17" height="17" viewBox="0 0 18 18"><use href="#asm"/></svg>
<span class="t" style="left:115px;top:439.8px;font-size:12.5px;transform:scaleX(0.780);">(+)</span>
<span class="t" style="left:129px;top:439.8px;font-size:12.5px;transform:scaleX(0.930);">4997.34.00.000 Заземление металлоконструкции крана</span>
<svg class="i" style="left:5.5px;top:465.5px;" width="15" height="15" viewBox="0 0 20 20"><use href="#eye"/></svg>
<svg class="i" style="left:31.5px;top:466px;" width="15" height="15" viewBox="0 0 20 20"><use href="#elem"/></svg>
<svg class="i" style="left:85.5px;top:470.0px" width="5" height="7" viewBox="0 0 5 7"><path d="M0 0v7l5-3.500z" fill="#222"/></svg>
<svg class="i" style="left:95px;top:464.5px;" width="17" height="17" viewBox="0 0 18 18"><use href="#asm"/></svg>
<span class="t" style="left:115px;top:465.8px;font-size:12.5px;transform:scaleX(0.780);">(+)</span>
<span class="t" style="left:129px;top:465.8px;font-size:12.5px;transform:scaleX(0.925);">4997.55.00.000 Установка Электропомещения</span>
<svg class="i" style="left:5.5px;top:491.5px;" width="15" height="15" viewBox="0 0 20 20"><use href="#eye"/></svg>
<svg class="i" style="left:31.5px;top:492px;" width="15" height="15" viewBox="0 0 20 20"><use href="#elem"/></svg>
<svg class="i" style="left:85.5px;top:496.0px" width="5" height="7" viewBox="0 0 5 7"><path d="M0 0v7l5-3.500z" fill="#222"/></svg>
<svg class="i" style="left:95px;top:490.5px;" width="17" height="17" viewBox="0 0 18 18"><use href="#asm"/></svg>
<span class="t" style="left:115px;top:491.8px;font-size:12.5px;transform:scaleX(0.780);">(+)</span>
<span class="t" style="left:129px;top:491.8px;font-size:12.5px;transform:scaleX(0.922);">4997.33.00.000 Токоподвод к крану</span>
<svg class="i" style="left:5.5px;top:517.5px;" width="15" height="15" viewBox="0 0 20 20"><use href="#eye"/></svg>
<svg class="i" style="left:31.5px;top:518px;" width="15" height="15" viewBox="0 0 20 20"><use href="#elem"/></svg>
<svg class="i" style="left:85.5px;top:522.0px" width="5" height="7" viewBox="0 0 5 7"><path d="M0 0v7l5-3.500z" fill="#222"/></svg>
<svg class="i" style="left:95px;top:516.5px;" width="17" height="17" viewBox="0 0 20 20"><use href="#multi"/></svg>
<span class="t" style="left:115px;top:517.8px;font-size:12.5px;transform:scaleX(0.780);">(+)</span>
<span class="t" style="left:129px;top:517.8px;font-size:12.5px;transform:scaleX(0.915);">3633.01.01.234 Кронштейн (х2)</span>
<svg class="i" style="left:5.5px;top:543.5px;" width="15" height="15" viewBox="0 0 20 20"><use href="#eye"/></svg>
<svg class="i" style="left:31.5px;top:544px;" width="15" height="15" viewBox="0 0 20 20"><use href="#elem"/></svg>
<svg class="i" style="left:85.5px;top:548.0px" width="5" height="7" viewBox="0 0 5 7"><path d="M0 0v7l5-3.500z" fill="#222"/></svg>
<svg class="i" style="left:95px;top:542.5px;" width="17" height="17" viewBox="0 0 20 20"><use href="#multi"/></svg>
<span class="t" style="left:115px;top:543.8px;font-size:12.5px;transform:scaleX(0.780);">(+)</span>
<span class="t" style="left:129px;top:543.8px;font-size:12.5px;transform:scaleX(0.947);">Огнетушитель ОУ-5 (х2)</span>
<svg class="i" style="left:5.5px;top:569.5px;" width="15" height="15" viewBox="0 0 20 20"><use href="#eye"/></svg>
<svg class="i" style="left:31.5px;top:570px;" width="15" height="15" viewBox="0 0 20 20"><use href="#elem"/></svg>
<svg class="i" style="left:85.5px;top:574.0px" width="5" height="7" viewBox="0 0 5 7"><path d="M0 0v7l5-3.500z" fill="#222"/></svg>
<svg class="i" style="left:95px;top:568.5px;" width="17" height="17" viewBox="0 0 20 20"><use href="#part"/></svg>
<span class="t" style="left:115px;top:569.8px;font-size:12.5px;transform:scaleX(0.780);">(+)</span>
<span class="t" style="left:129px;top:569.8px;font-size:12.5px;transform:scaleX(0.967);">Ящик пожарный ЯП-1</span>
<svg class="i" style="left:5.5px;top:595.5px;" width="15" height="15" viewBox="0 0 20 20"><use href="#eye"/></svg>
<svg class="i" style="left:31.5px;top:596px;" width="15" height="15" viewBox="0 0 20 20"><use href="#elem"/></svg>
<svg class="i" style="left:85.5px;top:600.0px" width="5" height="7" viewBox="0 0 5 7"><path d="M0 0v7l5-3.500z" fill="#222"/></svg>
<svg class="i" style="left:95px;top:594.5px;" width="17" height="17" viewBox="0 0 20 20"><use href="#part"/></svg>
<span class="t" style="left:115px;top:595.8px;font-size:12.5px;transform:scaleX(0.780);">(+)</span>
<span class="t" style="left:129px;top:595.8px;font-size:12.5px;transform:scaleX(0.989);">Совок пожарный</span>
<svg class="i" style="left:31.5px;top:622px;" width="15" height="15" viewBox="0 0 20 20"><use href="#elem"/></svg>
<svg class="i" style="left:75.5px;top:626.0px" width="5" height="7" viewBox="0 0 5 7"><path d="M0 0v7l5-3.500z" fill="#222"/></svg>
<svg class="i" style="left:85.5px;top:620.5px;" width="17" height="17" viewBox="0 0 20 20"><use href="#clip"/></svg>
<span class="t" style="left:104.5px;top:621.8px;font-size:12.5px;transform:scaleX(0.956);">Сопряжения</span>
<div style="left:0px;top:676.5px;width:401px;height:1.5px;background:#8a8a8a;"></div>
<div style="left:0px;top:678px;width:401px;height:24px;background:#f4f4f4;"></div>
<div style="left:26px;top:678px;width:26px;height:24px;background:#4d4d4d;"></div>
<svg class="i" style="left:5px;top:682px;" width="16" height="16" viewBox="0 0 20 20"><use href="#treeb"/></svg>
<svg class="i" style="left:31px;top:682px;color:#fff" width="16" height="16" viewBox="0 0 20 20"><use href="#checkl"/></svg>
<div style="left:0px;top:702px;width:401px;height:1.5px;background:#8c8c8c;"></div>
<div style="left:0px;top:703.5px;width:401px;height:1.5px;background:#c8c8c8;"></div>
<div style="left:400px;top:0px;width:1px;height:896px;background:#5a5a5a;"></div>
</div>
<div style="left:428px;top:146px;width:1493px;height:895px;background:#fff;"></div>
<div style="left:580px;top:145px;width:588px;height:26px;background:#f2f2f2;border:1px solid #6a6a6a;border-top:none;box-sizing:border-box"></div>
<div style="left:581px;top:145px;width:15px;height:25px;background:#e2e2e2;"></div>
<svg class="i" style="left:583px;top:148px;color:#555" width="12" height="6" viewBox="0 0 12 6"><use href="#grip"/></svg>
<div style="left:596px;top:145px;width:1px;height:25px;background:#7a7a7a;"></div>
<div style="left:652px;top:145px;width:1px;height:25px;background:#7a7a7a;"></div>
<div style="left:776.5px;top:145px;width:1px;height:25px;background:#7a7a7a;"></div>
<div style="left:853.5px;top:145px;width:1px;height:25px;background:#7a7a7a;"></div>
<div style="left:952px;top:145px;width:1px;height:25px;background:#7a7a7a;"></div>
<div style="left:1061.5px;top:145px;width:1px;height:25px;background:#7a7a7a;"></div>
<div style="left:1111px;top:145px;width:1px;height:25px;background:#7a7a7a;"></div>
<div style="left:778px;top:145px;width:25.5px;height:25px;background:#4d4d4d;"></div>
<div style="left:953px;top:145px;width:25.5px;height:25px;background:#4d4d4d;"></div>
<div style="left:1062.5px;top:145px;width:47.5px;height:25px;background:#4d4d4d;"></div>
<svg class="i" style="left:600.7px;top:147.5px;" width="20" height="20" viewBox="0 0 20 20"><use href="#vt1"/></svg>
<svg class="i" style="left:628px;top:147.5px;" width="20" height="20" viewBox="0 0 20 20"><use href="#vt2"/></svg>
<svg class="i" style="left:656.6px;top:147.5px;" width="20" height="20" viewBox="0 0 20 20"><use href="#vzoom"/></svg>
<svg class="i" style="left:705px;top:147.5px;" width="20" height="20" viewBox="0 0 20 20"><use href="#vnorm"/></svg>
<svg class="i" style="left:731.5px;top:147.5px;" width="20" height="20" viewBox="0 0 20 20"><use href="#vorient"/></svg>
<svg class="i" style="left:781px;top:147.5px;" width="20" height="20" viewBox="0 0 20 20"><use href="#vshade"/></svg>
<svg class="i" style="left:808px;top:147.5px;" width="20" height="20" viewBox="0 0 20 20"><use href="#vwire"/></svg>
<svg class="i" style="left:858px;top:147.5px;" width="20" height="20" viewBox="0 0 20 20"><use href="#veyeoff"/></svg>
<svg class="i" style="left:906px;top:147.5px;" width="20" height="20" viewBox="0 0 20 20"><use href="#veyebox"/></svg>
<svg class="i" style="left:956px;top:147.5px;" width="20" height="20" viewBox="0 0 20 20"><use href="#vnodes"/></svg>
<svg class="i" style="left:983px;top:147.5px;" width="20" height="20" viewBox="0 0 20 20"><use href="#vdim"/></svg>
<svg class="i" style="left:1010.3px;top:147.5px;" width="20" height="20" viewBox="0 0 20 20"><use href="#vsec"/></svg>
<svg class="i" style="left:1037.3px;top:147.5px;" width="20" height="20" viewBox="0 0 20 20"><use href="#vlayers"/></svg>
<svg class="i" style="left:1066px;top:147.5px;" width="20" height="20" viewBox="0 0 20 20"><use href="#vfilter"/></svg>
<svg class="i" style="left:1115.7px;top:147.5px;" width="20" height="20" viewBox="0 0 20 20"><use href="#vcrane"/></svg>
<svg class="i" style="left:1144.3px;top:147.5px;color:#c6c6c6" width="20" height="20" viewBox="0 0 20 20"><use href="#vpick"/></svg>
<svg class="i" style="left:686.3px;top:155.0px" width="9" height="5" viewBox="0 0 9 5"><path d="M0 0h9l-4.500 5z" fill="#222"/></svg>
<svg class="i" style="left:760.2px;top:155.0px" width="9" height="5" viewBox="0 0 9 5"><path d="M0 0h9l-4.500 5z" fill="#222"/></svg>
<svg class="i" style="left:837.8px;top:155.0px" width="9" height="5" viewBox="0 0 9 5"><path d="M0 0h9l-4.500 5z" fill="#222"/></svg>
<svg class="i" style="left:886.9px;top:155.0px" width="9" height="5" viewBox="0 0 9 5"><path d="M0 0h9l-4.500 5z" fill="#222"/></svg>
<svg class="i" style="left:935.5px;top:155.0px" width="9" height="5" viewBox="0 0 9 5"><path d="M0 0h9l-4.500 5z" fill="#222"/></svg>
<svg class="i" style="left:1095.2px;top:155.0px" width="9" height="5" viewBox="0 0 9 5"><path d="M0 0h9l-4.500 5z" fill="#fff"/></svg>
<div style="left:0px;top:1040px;width:1921px;height:1px;background:#222;"></div>
<div style="left:1920px;top:95px;width:1px;height:946px;background:#222;"></div>
<div style="left:1919px;top:0px;width:2px;height:7px;background:#222;"></div>
<svg style="position:absolute;left:429px;top:146px" width="1491" height="894" viewBox="429 146 1491 894"><defs><pattern id="dots" width="2.500" height="2.500" patternUnits="userSpaceOnUse"><circle cx="1.250" cy="1.250" r=".550" fill="#222"/></pattern></defs><rect x="772" y="606" width="220" height="4.5" fill="#FF0000" stroke="#000" stroke-width="0.6"/><rect x="1356" y="606" width="221" height="4.5" fill="#FF0000" stroke="#000" stroke-width="0.6"/><rect x="772" y="632.5" width="805" height="4.5" fill="#FF0000" stroke="#000" stroke-width="0.6"/><rect x="772" y="658.5" width="805" height="4.5" fill="#FF0000" stroke="#000" stroke-width="0.6"/><rect x="1413.75" y="342.5" width="100" height="57.5" fill="#FFE033" stroke="#000" stroke-width="0.7"/><rect x="1513.75" y="342.5" width="38.25" height="162.5" fill="#FFE033" stroke="#000" stroke-width="0.8"/><path d="M1507.800 470 1519 470 1519 508 1507.800 505z" fill="#FFE033" stroke="#000" stroke-width="0.6"/><path d="M1519 505 1554 495.800 1554 490 1519 490z" fill="#FFE033" stroke="#000" stroke-width="0.5"/><path d="M1523 452H1552 M1523 490H1552 M1540 452V495 M1546 380V500" fill="none" stroke="#000" stroke-width="0.6"/><rect x="980" y="361" width="388" height="60.5" fill="#FFE033" stroke="#000" stroke-width="0.8"/><rect x="1087.5" y="443.75" width="173" height="50.65" fill="#FFE033" stroke="#000" stroke-width="0.8"/><rect x="1117" y="438.5" width="114" height="5.25" fill="#FFE033" stroke="#000" stroke-width="0.8"/><path d="M1087.500 457H1260.500 M1087.500 483H1260.500 M1097 457V483 M1128.750 457V483 M1174.400 457V483 M1219.300 457V483 M1251 457V483" fill="none" stroke="#000" stroke-width="0.7"/><circle cx="1103" cy="460" r=".9" fill="#445"/><circle cx="1245" cy="460" r=".9" fill="#445"/><circle cx="1103" cy="464.5" r=".9" fill="#445"/><circle cx="1245" cy="464.5" r=".9" fill="#445"/><circle cx="1103" cy="469" r=".9" fill="#445"/><circle cx="1245" cy="469" r=".9" fill="#445"/><circle cx="1103" cy="473.5" r=".9" fill="#445"/><circle cx="1245" cy="473.5" r=".9" fill="#445"/><circle cx="1103" cy="478" r=".9" fill="#445"/><circle cx="1245" cy="478" r=".9" fill="#445"/><path d="M1105 193.800H1243Q1270 196 1288 219L1302 240V327H1046V240L1060 219Q1078 196 1105 193.800z" fill="#FFE033" stroke="#000" stroke-width=".9"/><path d="M796 275 796 258 809 243.5 895.600 243.5 895.600 247.5 811 247.5 800 259.5 800 275z" fill="#FFE033" stroke="#000" stroke-width="0.7"/><path d="M845 247.5 850 247.5 895.600 287 895.600 291 892 291z" fill="#FFE033" stroke="#000" stroke-width="0.7"/><path d="M810.500 241 812 243.5 809 243.5z" fill="#000" stroke="#000" stroke-width="0.3"/><path d="M854.500 241 856 243.5 853 243.5z" fill="#000" stroke="#000" stroke-width="0.3"/><rect x="802.5" y="257" width="43.1" height="5.5" fill="#FFE033" stroke="#000" stroke-width="0.7" rx="1.5"/><path d="M811 262.5 828 262.5 828 280z" fill="#FFE033" stroke="#000" stroke-width="0.7"/><rect x="828" y="262.5" width="17.6" height="117.5" fill="#FFE033" stroke="#000" stroke-width="0.7"/><path d="M836.500 262.5V376" fill="none" stroke="#000" stroke-width="1.2"/><rect x="797" y="266" width="9" height="10" fill="#111" stroke="#000" stroke-width="0.3"/><rect x="795.5" y="272" width="12.5" height="4" fill="#FFE033" stroke="#000" stroke-width="0.5"/><rect x="793.5" y="275" width="23.5" height="62" fill="#454545" stroke="#000" stroke-width="0.6"/><rect x="793.5" y="275" width="23.5" height="9.5" fill="#0a0a0a" stroke="#000" stroke-width="0.3"/><path d="M794 286.5H816.500" fill="none" stroke="#bdbdbd" stroke-width="1.1"/><path d="M805 276V289" fill="none" stroke="#000" stroke-width="0.8"/><path d="M794 322.5H816.500" fill="none" stroke="#222" stroke-width="0.6"/><g transform="translate(2348 0) scale(-1 1)"><path d="M796 249.5 796 232.5 809 218.0 895.600 218.0 895.600 222.0 811 222.0 800 234.0 800 249.5z" fill="#FFE033" stroke="#000" stroke-width="0.7"/><path d="M845 222.0 850 222.0 895.600 261.5 895.600 265.5 892 265.5z" fill="#FFE033" stroke="#000" stroke-width="0.7"/><path d="M810.500 215.5 812 218.0 809 218.0z" fill="#000" stroke="#000" stroke-width="0.3"/><path d="M854.500 215.5 856 218.0 853 218.0z" fill="#000" stroke="#000" stroke-width="0.3"/><rect x="802.5" y="231.5" width="43.1" height="5.5" fill="#FFE033" stroke="#000" stroke-width="0.7" rx="1.5"/><path d="M811 237.0 828 237.0 828 254.5z" fill="#FFE033" stroke="#000" stroke-width="0.7"/><rect x="828" y="237" width="17.6" height="143" fill="#FFE033" stroke="#000" stroke-width="0.7"/><path d="M836.500 237.0V376" fill="none" stroke="#000" stroke-width="1.2"/><rect x="797" y="240.5" width="9" height="10" fill="#111" stroke="#000" stroke-width="0.3"/><rect x="795.5" y="246.5" width="12.5" height="4" fill="#FFE033" stroke="#000" stroke-width="0.5"/><rect x="793.5" y="249.5" width="23.5" height="62" fill="#454545" stroke="#000" stroke-width="0.6"/><rect x="793.5" y="249.5" width="23.5" height="9.5" fill="#0a0a0a" stroke="#000" stroke-width="0.3"/><path d="M794 261.0H816.500" fill="none" stroke="#bdbdbd" stroke-width="1.1"/><path d="M805 250.5V263.5" fill="none" stroke="#000" stroke-width="0.8"/><path d="M794 297.0H816.500" fill="none" stroke="#222" stroke-width="0.6"/></g><rect x="1162" y="422.5" width="23.6" height="13.5" fill="#4fae1e" stroke="#000" stroke-width="0.5"/><rect x="1160" y="434" width="28" height="4.5" fill="#FFE033" stroke="#000" stroke-width="0.5"/><rect x="1100" y="348.75" width="55" height="12.25" fill="#5f6b73" stroke="#000" stroke-width="0.5" rx="3"/><rect x="1157.5" y="346" width="80.5" height="10" fill="#111" stroke="#000" stroke-width="0.3"/><path d="M1160 346V356 M1164 346V356 M1168 346V356 M1172 346V356 M1176 346V356 M1180 346V356 M1184 346V356 M1188 346V356 M1192 346V356 M1196 346V356 M1200 346V356 M1204 346V356 M1208 346V356 M1212 346V356 M1216 346V356 M1220 346V356 M1224 346V356 M1228 346V356 M1232 346V356" fill="none" stroke="#444" stroke-width="0.5"/><rect x="1073" y="345" width="4.5" height="13" fill="#1E90FF" stroke="#000" stroke-width="0.4"/><path d="M1069 361 1073 356 1078 356 1082 361z" fill="#1E90FF" stroke="#000" stroke-width="0.4"/><rect x="1088" y="340" width="8" height="15" fill="#1E90FF" stroke="#000" stroke-width="0.4"/><path d="M1083 361 1088 354 1096 354 1101 361z" fill="#1E90FF" stroke="#000" stroke-width="0.4"/><rect x="1097" y="337" width="15" height="12" fill="#FFE033" stroke="#000" stroke-width="0.5"/><rect x="1230" y="343" width="6" height="15" fill="#1E90FF" stroke="#000" stroke-width="0.4"/><path d="M1226 361 1230 355 1238 355 1242 361z" fill="#1E90FF" stroke="#000" stroke-width="0.4"/><rect x="1248" y="345" width="26" height="15.5" fill="#2fb52f" stroke="#000" stroke-width="0.5"/><rect x="1255" y="340" width="13" height="5" fill="#2fb52f" stroke="#000" stroke-width="0.4"/><g id="hf"><rect x="779" y="380" width="3.5" height="51" fill="#FFE033" stroke="#000" stroke-width="0.8"/><path d="M606 375.500 820 375.500 820 380 608 380 606 378z" fill="#FFE033" stroke="#000" stroke-width="0.8"/><rect x="819" y="362.5" width="8.5" height="67.5" fill="#FFE033" stroke="#000" stroke-width="0.8"/><rect x="766" y="432.5" width="7" height="8.1" fill="#FFE033" stroke="#000" stroke-width="0.8"/><rect x="773" y="429.4" width="33" height="13.6" fill="#FFE033" stroke="#000" stroke-width="0.8"/><path d="M810 428.800 866 428.800 866 447 810 443.500z" fill="#FFE033" stroke="#000" stroke-width="0.8"/><rect x="806.8" y="425" width="3.8" height="23" fill="#FFE033" stroke="#000" stroke-width="0.8"/><path d="M776 431l30 4" fill="none" stroke="#000" stroke-width="0.6"/><path d="M791.500 445V490 M822 445V490 M827 452V500" fill="none" stroke="#000" stroke-width="3.5" stroke-linejoin="round"/><path d="M791.500 445V490 M822 445V490 M827 452V500" fill="none" stroke="#F2D22E" stroke-width="1.6" stroke-linejoin="round"/><path d="M793 461H826" fill="none" stroke="#000" stroke-width="3.3" stroke-linejoin="round"/><path d="M793 461H826" fill="none" stroke="#F2D22E" stroke-width="1.4" stroke-linejoin="round"/><rect x="790.6" y="488" width="40.4" height="7" fill="#FFE033" stroke="#000" stroke-width="0.8"/><rect x="790.6" y="495" width="145.4" height="11" fill="#FFE033" stroke="#000" stroke-width="0.8"/><path d="M790.600 506 936 506 936 510 982 510 982 515.500 790.600 515.500z" fill="#FFE033" stroke="#000" stroke-width="0.8"/><path d="M790.600 506L936 512.500" fill="none" stroke="#000" stroke-width="0.7"/><path d="M833.800 467 850 455 866 455 866 427.500 1052 427.500 1052 455 1076 455 1085 463 1085 480 1080 495 931 495 931 505 833.800 505z" fill="#FFE033" stroke="#000" stroke-width="0.8"/><path d="M1052 432L1087 463" fill="none" stroke="#000" stroke-width="3.5" stroke-linejoin="round"/><path d="M1052 432L1087 463" fill="none" stroke="#F2D22E" stroke-width="1.6" stroke-linejoin="round"/><path d="M1029 470H1010Q1003 462 996 462" fill="none" stroke="#000" stroke-width="0.7"/><path d="M982 457.500H1029" fill="none" stroke="#000" stroke-width="0.7"/><rect x="936" y="462" width="46" height="33" fill="#EEC234" stroke="#000" stroke-width="0.8"/><rect x="982" y="462" width="14" height="33" fill="#FFE033" stroke="#000" stroke-width="0.8"/><circle cx="986" cy="466" r=".9" fill="#333"/><circle cx="992" cy="466" r=".9" fill="#333"/><circle cx="986" cy="472" r=".9" fill="#333"/><circle cx="992" cy="472" r=".9" fill="#333"/><circle cx="986" cy="478" r=".9" fill="#333"/><circle cx="992" cy="478" r=".9" fill="#333"/><circle cx="986" cy="484" r=".9" fill="#333"/><circle cx="992" cy="484" r=".9" fill="#333"/><circle cx="986" cy="490" r=".9" fill="#333"/><circle cx="992" cy="490" r=".9" fill="#333"/><rect x="931" y="495" width="51" height="10.5" fill="#FFE033" stroke="#000" stroke-width="0.8"/><path d="M867.500 471V444Q868 434 877 434H880Q886 436 886 446V471z" fill="#FFE033" stroke="#000" stroke-width=".8"/><circle cx="877" cy="439.4" r="1.6" fill="#1E6FE0" stroke="#000" stroke-width="0.5"/><circle cx="878" cy="460.6" r="5" fill="#FFE033" stroke="#000" stroke-width="0.7"/><rect x="872.5" y="455" width="11" height="11" fill="none" stroke="#000" stroke-width="0.6"/><path d="M1029 470V444Q1030 434.400 1038 434.400H1041Q1049.400 436 1049.400 446V470z" fill="#FFE033" stroke="#000" stroke-width=".8"/><ellipse cx="1041" cy="440" rx="2.4" ry="1.7" fill="#fff" stroke="#000" stroke-width="0.6"/><circle cx="1039.4" cy="460.6" r="5" fill="#FFE033" stroke="#000" stroke-width="0.7"/><rect x="1034" y="455" width="11" height="11" fill="none" stroke="#000" stroke-width="0.6"/><path d="M996 457V446Q997 440 1004 440Q1011 441 1011 448V457" fill="none" stroke="#000" stroke-width=".7"/><path d="M886 457V446Q887 440 894 440Q901 441 901 448V457" fill="none" stroke="#000" stroke-width=".7"/><path d="M835 474.5A20.500 20.500 0 0 0 863 501.5L861 493.5A13 13 0 0 1 841.5 477.5z" fill="#8E1010" stroke="#000" stroke-width=".7"/><path d="M834 474.5V468H867V496.5H862V474.5z" fill="#FFE033" stroke="#000" stroke-width=".7"/><circle cx="853" cy="483.5" r="13.5" fill="#FFE033" stroke="#000" stroke-width="0.8"/><circle cx="853" cy="483.5" r="11.5" fill="none" stroke="#000" stroke-width="0.6"/><circle cx="853" cy="483.5" r="8.5" fill="#FFE94D" stroke="#000" stroke-width="0.7"/><circle cx="864.5" cy="488.3" r=".8" fill="#222"/><circle cx="857.8" cy="495.0" r=".8" fill="#222"/><circle cx="848.2" cy="495.0" r=".8" fill="#222"/><circle cx="841.5" cy="488.3" r=".8" fill="#222"/><circle cx="841.5" cy="478.7" r=".8" fill="#222"/><circle cx="848.2" cy="472.0" r=".8" fill="#222"/><circle cx="857.8" cy="472.0" r=".8" fill="#222"/><circle cx="864.5" cy="478.7" r=".8" fill="#222"/><path d="M923 474.5A20.500 20.500 0 0 1 895 501.5L897 493.5A13 13 0 0 0 916.5 477.5z" fill="#8E1010" stroke="#000" stroke-width=".7"/><path d="M924 474.5V468H891V496.5H896V474.5z" fill="#FFE033" stroke="#000" stroke-width=".7"/><circle cx="905" cy="483.5" r="13.5" fill="#FFE033" stroke="#000" stroke-width="0.8"/><circle cx="905" cy="483.5" r="11.5" fill="none" stroke="#000" stroke-width="0.6"/><circle cx="905" cy="483.5" r="8.5" fill="#FFE94D" stroke="#000" stroke-width="0.7"/><circle cx="916.5" cy="488.3" r=".8" fill="#222"/><circle cx="909.8" cy="495.0" r=".8" fill="#222"/><circle cx="900.2" cy="495.0" r=".8" fill="#222"/><circle cx="893.5" cy="488.3" r=".8" fill="#222"/><circle cx="893.5" cy="478.7" r=".8" fill="#222"/><circle cx="900.2" cy="472.0" r=".8" fill="#222"/><circle cx="909.8" cy="472.0" r=".8" fill="#222"/><circle cx="916.5" cy="478.7" r=".8" fill="#222"/><path d="M995 474.5A20.500 20.500 0 0 0 1023 501.5L1021 493.5A13 13 0 0 1 1001.5 477.5z" fill="#8E1010" stroke="#000" stroke-width=".7"/><path d="M994 474.5V468H1027V496.5H1022V474.5z" fill="#FFE033" stroke="#000" stroke-width=".7"/><circle cx="1013" cy="483.5" r="13.5" fill="#FFE033" stroke="#000" stroke-width="0.8"/><circle cx="1013" cy="483.5" r="11.5" fill="none" stroke="#000" stroke-width="0.6"/><circle cx="1013" cy="483.5" r="8.5" fill="#FFE94D" stroke="#000" stroke-width="0.7"/><circle cx="1024.5" cy="488.3" r=".8" fill="#222"/><circle cx="1017.8" cy="495.0" r=".8" fill="#222"/><circle cx="1008.2" cy="495.0" r=".8" fill="#222"/><circle cx="1001.5" cy="488.3" r=".8" fill="#222"/><circle cx="1001.5" cy="478.7" r=".8" fill="#222"/><circle cx="1008.2" cy="472.0" r=".8" fill="#222"/><circle cx="1017.8" cy="472.0" r=".8" fill="#222"/><circle cx="1024.5" cy="478.7" r=".8" fill="#222"/><path d="M1084 474.5A20.500 20.500 0 0 1 1056 501.5L1058 493.5A13 13 0 0 0 1077.5 477.5z" fill="#8E1010" stroke="#000" stroke-width=".7"/><path d="M1085 474.5V468H1052V496.5H1057V474.5z" fill="#FFE033" stroke="#000" stroke-width=".7"/><circle cx="1066" cy="483.5" r="13.5" fill="#FFE033" stroke="#000" stroke-width="0.8"/><circle cx="1066" cy="483.5" r="11.5" fill="none" stroke="#000" stroke-width="0.6"/><circle cx="1066" cy="483.5" r="8.5" fill="#FFE94D" stroke="#000" stroke-width="0.7"/><circle cx="1077.5" cy="488.3" r=".8" fill="#222"/><circle cx="1070.8" cy="495.0" r=".8" fill="#222"/><circle cx="1061.2" cy="495.0" r=".8" fill="#222"/><circle cx="1054.5" cy="488.3" r=".8" fill="#222"/><circle cx="1054.5" cy="478.7" r=".8" fill="#222"/><circle cx="1061.2" cy="472.0" r=".8" fill="#222"/><circle cx="1070.8" cy="472.0" r=".8" fill="#222"/><circle cx="1077.5" cy="478.7" r=".8" fill="#222"/><rect x="867" y="471" width="23" height="24.5" fill="#FFE033" stroke="#000" stroke-width="0.7"/><rect x="1028" y="470" width="23" height="25.5" fill="#FFE033" stroke="#000" stroke-width="0.7"/><rect x="871" y="486.5" width="3" height="4.2" fill="#8E1010" stroke="#000" stroke-width="0.5"/><rect x="882.25" y="486.5" width="3" height="4.2" fill="#8E1010" stroke="#000" stroke-width="0.5"/><rect x="1032.25" y="486.5" width="3" height="4.2" fill="#8E1010" stroke="#000" stroke-width="0.5"/><rect x="1043.5" y="486.5" width="3" height="4.2" fill="#8E1010" stroke="#000" stroke-width="0.5"/><path d="M833.800 467H845 M913 467H931" fill="none" stroke="#000" stroke-width="0.7"/><rect x="1075" y="422" width="18" height="11" fill="#FFE033" stroke="#000" stroke-width="0.6"/><rect x="1078" y="422" width="13" height="6" fill="#8a3020" stroke="#000" stroke-width="0.4"/><rect x="1098" y="428" width="15" height="10.5" fill="#FFE033" stroke="#000" stroke-width="0.6"/><rect x="1100" y="422" width="12" height="4" fill="#8a3020" stroke="#000" stroke-width="0.4"/><rect x="1143" y="422" width="15" height="4" fill="#8a3020" stroke="#000" stroke-width="0.4"/><rect x="1117" y="431" width="43" height="7.5" fill="#FFE033" stroke="#000" stroke-width="0.6"/><path d="M1125 422V431 M1135 422V431 M1150 426V431" fill="none" stroke="#C9A82A" stroke-width="1.2"/><rect x="1056" y="421.5" width="6" height="21.5" fill="#FFE033" stroke="#000" stroke-width="0.5"/><rect x="1064" y="421.5" width="4" height="14.5" fill="#FFE033" stroke="#000" stroke-width="0.5"/><rect x="937.5" y="360.6" width="44.5" height="96.9" fill="#FFE033" stroke="#000" stroke-width="0.8"/><ellipse cx="958.75" cy="400" rx="9.5" ry="12.5" fill="#FFE01A" stroke="#000" stroke-width="0.9"/><path d="M951.500 408.500Q955 406.500 958.750 408Q962.500 406.500 966 408.500Q963 412.800 958.750 412.800Q954.500 412.800 951.500 408.500z" fill="#fff" stroke="#000" stroke-width=".5"/><rect x="950" y="437" width="17.5" height="15" fill="#FFE033" stroke="#000" stroke-width="0.7"/><circle cx="958.75" cy="444.5" r="6" fill="#FFE033" stroke="#000" stroke-width="0.7"/><path d="M941 360.600V457.500 M978.500 360.600V457.500" fill="none" stroke="#000" stroke-width="0.6"/><rect x="985" y="362" width="25" height="55.5" fill="#FFE033" stroke="#000" stroke-width="0.7"/><circle cx="988" cy="364.8" r="1.350" fill="#111"/><circle cx="988" cy="373.5" r="1.350" fill="#111"/><circle cx="988" cy="380.6" r="1.350" fill="#111"/><circle cx="988" cy="387.5" r="1.350" fill="#111"/><circle cx="988" cy="394.4" r="1.350" fill="#111"/><circle cx="988" cy="401.3" r="1.350" fill="#111"/><circle cx="988" cy="408.1" r="1.350" fill="#111"/><circle cx="988" cy="415" r="1.350" fill="#111"/><circle cx="994.4" cy="364.8" r="1.350" fill="#111"/><circle cx="994.4" cy="373.5" r="1.350" fill="#111"/><circle cx="994.4" cy="380.6" r="1.350" fill="#111"/><circle cx="994.4" cy="387.5" r="1.350" fill="#111"/><circle cx="994.4" cy="394.4" r="1.350" fill="#111"/><circle cx="994.4" cy="401.3" r="1.350" fill="#111"/><circle cx="994.4" cy="408.1" r="1.350" fill="#111"/><circle cx="994.4" cy="415" r="1.350" fill="#111"/><circle cx="1000.6" cy="364.8" r="1.350" fill="#111"/><circle cx="1000.6" cy="373.5" r="1.350" fill="#111"/><circle cx="1000.6" cy="380.6" r="1.350" fill="#111"/><circle cx="1000.6" cy="387.5" r="1.350" fill="#111"/><circle cx="1000.6" cy="394.4" r="1.350" fill="#111"/><circle cx="1000.6" cy="401.3" r="1.350" fill="#111"/><circle cx="1000.6" cy="408.1" r="1.350" fill="#111"/><circle cx="1000.6" cy="415" r="1.350" fill="#111"/><circle cx="1007" cy="364.8" r="1.350" fill="#111"/><circle cx="1007" cy="373.5" r="1.350" fill="#111"/><circle cx="1007" cy="380.6" r="1.350" fill="#111"/><circle cx="1007" cy="387.5" r="1.350" fill="#111"/><circle cx="1007" cy="394.4" r="1.350" fill="#111"/><circle cx="1007" cy="401.3" r="1.350" fill="#111"/><circle cx="1007" cy="408.1" r="1.350" fill="#111"/><circle cx="1007" cy="415" r="1.350" fill="#111"/><circle cx="1026.25" cy="394.4" r="9" fill="#FFE01A" stroke="#000" stroke-width="0.8"/><circle cx="1026.25" cy="394.4" r="6.3" fill="#fff" stroke="#000" stroke-width="0.8"/><path d="M996.750 226.400A27 27 0 0 1 1050.750 226.400V300H996.750z" fill="#FFE033" stroke="#000" stroke-width=".8"/><path d="M1003 209H1045" fill="none" stroke="#000" stroke-width="0.6"/><rect x="1004" y="206.5" width="9" height="2.2" fill="#888" stroke="#000" stroke-width="0.4"/><rect x="1034" y="206.5" width="9" height="2.2" fill="#888" stroke="#000" stroke-width="0.4"/><rect x="1015" y="209.5" width="16" height="2.5" fill="#8a3020" stroke="#000" stroke-width="0.3"/><rect x="1012" y="214" width="23" height="30" fill="#FFE033" stroke="#000" stroke-width="0.6"/><circle cx="1023.75" cy="231" r="6.5" fill="#9a9a9a" stroke="#000" stroke-width="0.7"/><path d="M1012 238H1035 M1016 219h15" fill="none" stroke="#000" stroke-width="0.5"/><path d="M1014 226 1018 229 1018 234 1014 237z" fill="#000" stroke="#000" stroke-width="0.3"/><path d="M1033.500 226 1029.500 229 1029.500 234 1033.500 237z" fill="#000" stroke="#000" stroke-width="0.3"/><path d="M1049 211Q1058 213 1064 221L1050.750 242z" fill="#0A8F0A" stroke="#000" stroke-width=".6"/><rect x="1008" y="266" width="34.5" height="83.4" fill="#0A8F0A" stroke="#000" stroke-width="0.7"/><rect x="1008" y="264" width="34.5" height="3.5" fill="#33D6E8" stroke="#000" stroke-width="0.5"/><path d="M1013 267V349 M1037 267V349" fill="none" stroke="#054f05" stroke-width="0.6"/><path d="M1042.500 300 1050 300 1050 322 1042.500 335z" fill="#FFE033" stroke="#000" stroke-width="0.6"/><path d="M989.400 232 994 222 999 219 999 280 989.400 280z" fill="#0A8F0A" stroke="#000" stroke-width="0.6"/><rect x="996" y="262" width="10.5" height="19" fill="#111" stroke="#000" stroke-width="0.4" rx="3"/><path d="M997.500 281 1005.500 281 1004.500 290 998.500 290z" fill="#bbb" stroke="#000" stroke-width="0.4"/><rect x="932.5" y="225.6" width="56.9" height="54.4" fill="#1E90FF" stroke="#000" stroke-width="0.7"/><rect x="945" y="233" width="32" height="47" fill="#fff" stroke="#000" stroke-width="0.5"/><circle cx="962.5" cy="253" r="18.5" fill="#5a5f63" stroke="#000" stroke-width="0.7"/><circle cx="962.5" cy="253" r="15" fill="#C41414" stroke="#000" stroke-width="0.6"/><circle cx="962.5" cy="253" r="4" fill="#7a1010" stroke="#000" stroke-width="0.5"/><path d="M962.500 238V268 M949 247L976 259 M949 259L976 247" fill="none" stroke="#6e0c0c" stroke-width="0.7"/><path d="M945 243 951 249 948 262 945 266z" fill="#1E90FF" stroke="#000" stroke-width="0.5"/><path d="M977 243 971 249 974 262 977 266z" fill="#1E90FF" stroke="#000" stroke-width="0.5"/><rect x="923.7" y="237.5" width="8.8" height="28.5" fill="#1E90FF" stroke="#000" stroke-width="0.6"/><rect x="919.5" y="261" width="5.5" height="6" fill="#1E90FF" stroke="#000" stroke-width="0.5"/><circle cx="936" cy="229.5" r="1.5" fill="#1E90FF" stroke="#0a3a80" stroke-width="0.5"/><circle cx="986" cy="229.5" r="1.5" fill="#1E90FF" stroke="#0a3a80" stroke-width="0.5"/><circle cx="936" cy="276" r="1.5" fill="#1E90FF" stroke="#0a3a80" stroke-width="0.5"/><circle cx="986" cy="276" r="1.5" fill="#1E90FF" stroke="#0a3a80" stroke-width="0.5"/><rect x="947" y="219" width="26" height="7" fill="#6a6f73" stroke="#000" stroke-width="0.5"/><rect x="982.5" y="225" width="6.25" height="55" fill="#1E90FF" stroke="#000" stroke-width="0.6"/><rect x="932.5" y="280" width="75.5" height="20" fill="#FFE033" stroke="#000" stroke-width="0.7"/><path d="M947 300V280 M972 300V280" fill="none" stroke="#000" stroke-width="0.6"/><path d="M900 281 931 281 931 290 922 297.500 906 297.500 900 290z" fill="#FFE033" stroke="#000" stroke-width="0.7"/><rect x="905" y="273" width="8" height="8" fill="#FFE033" stroke="#000" stroke-width="0.6"/><path d="M900.500 290V352 M930 290V352" fill="none" stroke="#000" stroke-width="3.9" stroke-linejoin="round"/><path d="M900.500 290V352 M930 290V352" fill="none" stroke="#F2D22E" stroke-width="2" stroke-linejoin="round"/><path d="M900.500 299H930 M900.500 315.500H930 M900.500 331.500H930 M900.500 348H930" fill="none" stroke="#000" stroke-width="3.4" stroke-linejoin="round"/><path d="M900.500 299H930 M900.500 315.500H930 M900.500 331.500H930 M900.500 348H930" fill="none" stroke="#F2D22E" stroke-width="1.5" stroke-linejoin="round"/><rect x="895.6" y="217.5" width="4.4" height="72.5" fill="#FFE033" stroke="#000" stroke-width="0.7"/><rect x="901" y="212" width="4" height="59" fill="#F00000" stroke="#000" stroke-width="0.6"/><rect x="901" y="271" width="4.5" height="4.5" fill="#111" stroke="#000" stroke-width="0.3"/><circle cx="903" cy="210.5" r="1.8" fill="#666" stroke="#000" stroke-width="0.5"/><rect x="851" y="276" width="5" height="84" fill="#B01010" stroke="#000" stroke-width="0.6"/><rect x="932.5" y="300" width="75.5" height="27" fill="#FFE033" stroke="#000" stroke-width="0.7"/><rect x="983.75" y="323" width="20" height="21.4" fill="#FFE033" stroke="#000" stroke-width="0.7"/><rect x="980" y="350" width="75" height="11" fill="#FFE033" stroke="#000" stroke-width="0.7"/><rect x="1042.5" y="300" width="133.5" height="27" fill="#FFE033" stroke="#000" stroke-width="0.7"/><path d="M1056 327V361 M1060 327V361" fill="none" stroke="#000" stroke-width="0.6"/><rect x="947" y="327" width="34" height="24" fill="#FFE033" stroke="#000" stroke-width="0.6"/><path d="M950 300V351 M969 300V351 M975 300V345" fill="none" stroke="#000" stroke-width="0.6"/><rect x="953" y="312.5" width="12" height="35" fill="#2a2a2a" stroke="#000" stroke-width="0.5"/><path d="M948.750 347 970 347 966 356 953 356z" fill="#FFE01A" stroke="#000" stroke-width="0.6"/><rect x="951" y="356" width="17" height="4.6" fill="#FFE033" stroke="#000" stroke-width="0.5"/><rect x="942" y="276" width="4" height="84" fill="#C81010" stroke="#000" stroke-width="0.6"/><clipPath id="gc"><rect x="1040" y="190" width="140" height="92"/></clipPath><g clip-path="url(#gc)"><circle cx="1112.500" cy="259" r="59" fill="none" stroke="#3c3c3c" stroke-width="4"/><circle cx="1112.500" cy="259" r="61.300" fill="none" stroke="#000" stroke-width=".6"/><circle cx="1112.500" cy="259" r="55.500" fill="none" stroke="#000" stroke-width=".7"/><circle cx="1112.500" cy="259" r="53.500" fill="none" stroke="#000" stroke-width=".6"/><circle cx="1096" cy="228" r="8.5" fill="#555" stroke="#000" stroke-width="0.7"/><path d="M1092 221L1100 235" stroke="#000" stroke-width="2.600" transform="rotate(0 1096 228)"/><circle cx="1130.6" cy="229" r="8.5" fill="#555" stroke="#000" stroke-width="0.7"/><path d="M1126.6 222L1134.6 236" stroke="#000" stroke-width="2.600" transform="rotate(60 1130.6 229)"/><circle cx="1077.5" cy="257.5" r="8" fill="#8a8a8a" stroke="#000" stroke-width="0.6"/><circle cx="1146" cy="256.5" r="7.5" fill="#222" stroke="#000" stroke-width="0.6"/></g><path d="M1163 234 1175 232 1175 262 1169 262 1164 250z" fill="#3c3c3c" stroke="#000" stroke-width="0"/><path d="M1166 236l3 2-3 2 3 2-3 2 3 2-3 2 3 2-3 2 3 2-3 2 3 2" fill="none" stroke="#000" stroke-width="0.6"/><rect x="1046" y="266" width="128" height="34" fill="#FFE033" stroke="none" stroke-width="0"/><rect x="1128" y="262" width="48" height="19" fill="#FFE033" stroke="#000" stroke-width="0.6"/><rect x="1098" y="272" width="30" height="9" fill="#FFE033" stroke="none" stroke-width="0"/><path d="M1099.500 252 1102 247 1105 250 1120 250 1123 247 1125.500 252 1125.500 258 1099.500 258z" fill="#4a4a4a" stroke="#000" stroke-width="0.4"/><circle cx="1112.5" cy="259" r="13.7" fill="#4a4a4a" stroke="#000" stroke-width="0.7"/><circle cx="1112.5" cy="259" r="8.3" fill="#FFE033" stroke="#000" stroke-width="0.7"/><circle cx="1112.5" cy="259" r="6.3" fill="#FFE033" stroke="#000" stroke-width="0.5"/><rect x="1098" y="280" width="76" height="5" fill="#111" stroke="#000" stroke-width="0.3"/><rect x="1060" y="266" width="38.75" height="22.75" fill="#5f6b73" stroke="#000" stroke-width="0.6"/><rect x="1062" y="272" width="25" height="13" fill="#000" stroke="#000" stroke-width="0.3"/><rect x="1064" y="264" width="11" height="4" fill="#5f6b73" stroke="#000" stroke-width="0.4"/><path d="M1066 289v4h22v-4" fill="none" stroke="#000" stroke-width="0.7"/><path d="M1086 300V327 M1100 300V327 M1122 300V327 M1143 300V327 M1160 300V327" fill="none" stroke="#000" stroke-width="0.7"/><rect x="1056" y="313" width="74" height="13" fill="#FFE033" stroke="#000" stroke-width="0.7"/><rect x="1130" y="316" width="46" height="8" fill="#FFE033" stroke="#000" stroke-width="0.7"/><path d="M837.500 334V304H868.500V362" fill="none" stroke="#000" stroke-width="3.7" stroke-linejoin="round"/><path d="M837.500 334V304H868.500V362" fill="none" stroke="#F2D22E" stroke-width="1.8" stroke-linejoin="round"/><path d="M861 334V362" fill="none" stroke="#000" stroke-width="3.3" stroke-linejoin="round"/><path d="M861 334V362" fill="none" stroke="#F2D22E" stroke-width="1.4" stroke-linejoin="round"/><rect x="840" y="362" width="95" height="4.5" fill="#FFE033" stroke="#000" stroke-width="0.7"/><path d="M840 367.500H935" fill="none" stroke="#000" stroke-width="1.2"/><path d="M840 369 935 374 935 390 880 388 840 380z" fill="#FFE033" stroke="#000" stroke-width="0.7"/><path d="M846 381.500L935 386" fill="none" stroke="#000" stroke-width="0.7"/><rect x="837" y="393" width="86.75" height="6" fill="#FFE033" stroke="#000" stroke-width="0.7"/><rect x="837" y="400" width="98" height="6.5" fill="#FFE033" stroke="#000" stroke-width="0.7"/><path d="M925 393 937 376 937 393z" fill="#FFE033" stroke="#000" stroke-width="0.6"/><path d="M835 396V343Q835 334 844 334H872Q880.600 334 880.600 343V393" fill="none" stroke="#000" stroke-width="3.9" stroke-linejoin="round"/><path d="M835 396V343Q835 334 844 334H872Q880.600 334 880.600 343V393" fill="none" stroke="#F2D22E" stroke-width="2" stroke-linejoin="round"/><path d="M883 345Q883 334 893 334H903Q913 334 913 345V388Q913 396.500 904 396.500H892Q883 396.500 883 388z" fill="none" stroke="#000" stroke-width="3.9" stroke-linejoin="round"/><path d="M883 345Q883 334 893 334H903Q913 334 913 345V388Q913 396.500 904 396.500H892Q883 396.500 883 388z" fill="none" stroke="#F2D22E" stroke-width="2" stroke-linejoin="round"/><path d="M880.600 362H913 M861 362V393 M872 366V393 M898 366V393" fill="none" stroke="#000" stroke-width="3.3" stroke-linejoin="round"/><path d="M880.600 362H913 M861 362V393 M872 366V393 M898 366V393" fill="none" stroke="#F2D22E" stroke-width="1.4" stroke-linejoin="round"/><path d="M915 334L940 300 M916 377.500L940 334" fill="none" stroke="#000" stroke-width="3.7" stroke-linejoin="round"/><path d="M915 334L940 300 M916 377.500L940 334" fill="none" stroke="#F2D22E" stroke-width="1.8" stroke-linejoin="round"/><path d="M884 396.500V430 M911 396.500V430 M838 406V430 M862 406V430" fill="none" stroke="#000" stroke-width="3.5" stroke-linejoin="round"/><path d="M884 396.500V430 M911 396.500V430 M838 406V430 M862 406V430" fill="none" stroke="#F2D22E" stroke-width="1.6" stroke-linejoin="round"/><path d="M838 416H862" fill="none" stroke="#000" stroke-width="3.2" stroke-linejoin="round"/><path d="M838 416H862" fill="none" stroke="#F2D22E" stroke-width="1.3" stroke-linejoin="round"/><rect x="884" y="340" width="5" height="3" fill="#555" stroke="#000" stroke-width="0.3"/><rect x="876" y="414" width="10" height="14" fill="#111" stroke="#000" stroke-width="0.3"/><rect x="887" y="413" width="10" height="14" fill="#1E90FF" stroke="#000" stroke-width="0.4"/><path d="M897 427 908 416 918 427z" fill="#C01010" stroke="#000" stroke-width="0.4"/><path d="M899 427 903 419 909 427z" fill="#0A8F0A" stroke="#000" stroke-width="0.3"/><rect x="913" y="415" width="4" height="13" fill="#1E90FF" stroke="#000" stroke-width="0.3"/><path d="M917 428 921 420 925 428z" fill="#0A8F0A" stroke="#000" stroke-width="0.3"/><rect x="930" y="408" width="6" height="19" fill="#C01010" stroke="#000" stroke-width="0.4"/><path d="M905 430 920 423 935 430z" fill="#FFE033" stroke="#000" stroke-width="0.5"/><path d="M1000 222Q1000 217.500 1008 217.500H1046" fill="none" stroke="#000" stroke-width="3.5" stroke-linejoin="round"/><path d="M1000 222Q1000 217.500 1008 217.500H1046" fill="none" stroke="#F2D22E" stroke-width="1.6" stroke-linejoin="round"/><path d="M935 280V226Q935 217.500 945 217.500H1000" fill="none" stroke="#000" stroke-width="3.7" stroke-linejoin="round"/><path d="M935 280V226Q935 217.500 945 217.500H1000" fill="none" stroke="#F2D22E" stroke-width="1.8" stroke-linejoin="round"/><path d="M962.500 219V280 M977 219V280 M935 248H989" fill="none" stroke="#000" stroke-width="3.4" stroke-linejoin="round"/><path d="M962.500 219V280 M977 219V280 M935 248H989" fill="none" stroke="#F2D22E" stroke-width="1.5" stroke-linejoin="round"/><path d="M1010 217.500V266 M1036 256H1120 M1053.750 217.500V300 M1086 222V300" fill="none" stroke="#000" stroke-width="3.5" stroke-linejoin="round"/><path d="M1010 217.500V266 M1036 256H1120 M1053.750 217.500V300 M1086 222V300" fill="none" stroke="#F2D22E" stroke-width="1.6" stroke-linejoin="round"/><path d="M980 248H1086Q1086 218 1072 218" fill="none" stroke="#000" stroke-width="3.4" stroke-linejoin="round"/><path d="M980 248H1086Q1086 218 1072 218" fill="none" stroke="#F2D22E" stroke-width="1.5" stroke-linejoin="round"/><path d="M1036 290V262Q1036 256 1043 256" fill="none" stroke="#000" stroke-width="3.5" stroke-linejoin="round"/><path d="M1036 290V262Q1036 256 1043 256" fill="none" stroke="#F2D22E" stroke-width="1.6" stroke-linejoin="round"/><path d="M1127.500 256V300 M1152 256V300 M1120 256H1174" fill="none" stroke="#000" stroke-width="3.5" stroke-linejoin="round"/><path d="M1127.500 256V300 M1152 256V300 M1120 256H1174" fill="none" stroke="#F2D22E" stroke-width="1.6" stroke-linejoin="round"/><path d="M958.600 316V301Q958.600 292.600 967 292.600H1046Q1052 293 1054 300 M958.600 316Q958.600 322.400 966 322.400H1046 M942 304.600H1174" fill="none" stroke="#000" stroke-width="3.4" stroke-linejoin="round"/><path d="M958.600 316V301Q958.600 292.600 967 292.600H1046Q1052 293 1054 300 M958.600 316Q958.600 322.400 966 322.400H1046 M942 304.600H1174" fill="none" stroke="#F2D22E" stroke-width="1.5" stroke-linejoin="round"/><path d="M1000 327V361 M1034 304V361 M1010 304V350 M1090 304V361 M1140 304V361 M1146 304V361 M1170 304V361" fill="none" stroke="#000" stroke-width="3.2" stroke-linejoin="round"/><path d="M1000 327V361 M1034 304V361 M1010 304V350 M1090 304V361 M1140 304V361 M1146 304V361 M1170 304V361" fill="none" stroke="#F2D22E" stroke-width="1.3" stroke-linejoin="round"/><path d="M938 334.400H1174" fill="none" stroke="#000" stroke-width="3.3" stroke-linejoin="round"/><path d="M938 334.400H1174" fill="none" stroke="#F2D22E" stroke-width="1.4" stroke-linejoin="round"/><path d="M983 304V361" fill="none" stroke="#000" stroke-width="3.2" stroke-linejoin="round"/><path d="M983 304V361" fill="none" stroke="#F2D22E" stroke-width="1.3" stroke-linejoin="round"/></g><use href="#hf" transform="translate(2348 0) scale(-1 1)"/><path d="M1206 262V318 M1234 262V318" fill="none" stroke="#000" stroke-width="3.5" stroke-linejoin="round"/><path d="M1206 262V318 M1234 262V318" fill="none" stroke="#F2D22E" stroke-width="1.6" stroke-linejoin="round"/><path d="M1206 292H1234 M1206 306H1234 M1206 318H1234" fill="none" stroke="#000" stroke-width="3.2" stroke-linejoin="round"/><path d="M1206 292H1234 M1206 306H1234 M1206 318H1234" fill="none" stroke="#F2D22E" stroke-width="1.3" stroke-linejoin="round"/><path d="M1100.400 286V313 M1116 286V313 M1130 286V313 M1152.400 286V313 M1196 286V313 M1248 286V313" fill="none" stroke="#000" stroke-width="0.7"/><g id="lh"><rect x="1066" y="500" width="34.6" height="30" fill="#D9AE2C" stroke="#000" stroke-width="0.7"/><path d="M1066 522H1100.600" fill="none" stroke="#000" stroke-width="0.6"/><path d="M1066 497 1100 497 1098 500 1068 500z" fill="#D9AE2C" stroke="#000" stroke-width="0.5"/><rect x="992" y="516" width="61" height="57.5" fill="#FFE033" stroke="#000" stroke-width="0.8"/><path d="M1050 516V573" fill="none" stroke="#000" stroke-width="1.4"/><path d="M1000 516 1003 509 1012 509 1015 516z" fill="#FFE033" stroke="#000" stroke-width="0.6"/><path d="M1030 516 1033 509 1042 509 1045 516z" fill="#FFE033" stroke="#000" stroke-width="0.6"/><circle cx="1001" cy="519.5" r="1.1" fill="#fff" stroke="#000" stroke-width="0.5"/><circle cx="1041" cy="519.5" r="1.1" fill="#fff" stroke="#000" stroke-width="0.5"/><path d="M995 497V516 M1025 497V516 M1055 497V573 M1062 497V540" fill="none" stroke="#444" stroke-width="1.6"/><rect x="1053.75" y="538.75" width="81.25" height="6.25" fill="#FFE033" stroke="#000" stroke-width="0.7"/><rect x="1062.5" y="540" width="4.5" height="5" fill="#FFE033" stroke="#000" stroke-width="0.5"/><rect x="1046" y="683" width="9.5" height="117" fill="#555" stroke="#000" stroke-width="0.7"/><path d="M1050.500 683V800" fill="none" stroke="#222" stroke-width="0.6"/><path d="M1046 796 1055.500 796 1057 860 1055 890 1047 890 1045 860z" fill="#4a4a4a" stroke="#000" stroke-width="0.7"/><path d="M1051 800V888" fill="none" stroke="#111" stroke-width="0.8"/><rect x="1040" y="832.7" width="6" height="31.3" fill="#EE1111" stroke="#000" stroke-width="0.6" rx="1.5"/><rect x="1046" y="843" width="10" height="12" fill="#333" stroke="#000" stroke-width="0.4"/><rect x="1043" y="676" width="15" height="8" fill="#FFE033" stroke="#000" stroke-width="0.6"/></g><use href="#lh" transform="translate(2348 0) scale(-1 1)"/><path d="M1097.500 573 1103 573 1133 545 1127.500 545z" fill="#FFE033" stroke="#000" stroke-width="0.7"/><rect x="1125" y="499.4" width="103" height="6.2" fill="#FFE033" stroke="#000" stroke-width="0.7"/><rect x="1125" y="507" width="103" height="3.5" fill="#FFE033" stroke="#000" stroke-width="0.6"/><rect x="1125" y="528.75" width="103" height="5.65" fill="#FFE033" stroke="#000" stroke-width="0.7"/><rect x="1125" y="499.4" width="3.5" height="34.6" fill="#FFE033" stroke="#000" stroke-width="0.6"/><rect x="1222" y="499.4" width="6" height="34.6" fill="#FFE033" stroke="#000" stroke-width="0.6"/><path d="M1145 528.750 1149 528.750 1166 510.500 1162 510.500z" fill="#FFE033" stroke="#000" stroke-width="0.6"/><path d="M1152 528.750 1156 528.750 1173 510.500 1169 510.500z" fill="#FFE033" stroke="#000" stroke-width="0.6"/><path d="M1203 510.500 1206 510.500 1210 528.750 1207 528.750z" fill="#FFE033" stroke="#000" stroke-width="0.6"/><rect x="1148" y="545" width="75" height="28.5" fill="#FFE033" stroke="#000" stroke-width="0.7"/><path d="M1135 535 1213.750 535 1213.750 543 1208 546 1203 540 1147 540 1141 546 1135 543z" fill="#FFE033" stroke="#000" stroke-width="0.7"/><path d="M1165.5 497V575" fill="none" stroke="#3a3a3a" stroke-width="1.5"/><path d="M1169 497V575" fill="none" stroke="#3a3a3a" stroke-width="1.5"/><path d="M1175.5 497V575" fill="none" stroke="#3a3a3a" stroke-width="1.5"/><path d="M1179 497V575" fill="none" stroke="#3a3a3a" stroke-width="1.5"/><path d="M1183.5 497V575" fill="none" stroke="#3a3a3a" stroke-width="1.5"/><path d="M1195.5 497V575" fill="none" stroke="#3a3a3a" stroke-width="1.5"/><rect x="1191" y="553" width="9.6" height="16.4" fill="#FFE033" stroke="#000" stroke-width="0.6"/><rect x="1220.6" y="539.4" width="74.4" height="5.6" fill="#FFE033" stroke="#000" stroke-width="0.7"/><path d="M990.600 573.500H1357.400V609L1314 683H1290.500V640Q1288 608 1255.500 606.500H1092.500Q1060 608 1057.500 640V683H1034L990.600 609z" fill="#FFE033" stroke="#000" stroke-width=".9"/><path d="M990.600 575.600H1357.400" fill="none" stroke="#000" stroke-width="0.8"/><path d="M996 575.600V609H990.600 M1352 575.600V609H1357.400" fill="none" stroke="#000" stroke-width="0.7"/><path d="M1088 575.600V606.500 M1092.500 575.600V606.500 M1148 575.600V606.500 M1199.400 575.600V606.500 M1252.500 575.600V606.500 M1255.600 575.600V606.500" fill="none" stroke="#000" stroke-width="0.8"/><path d="M1096 610.500Q1063 612 1061 644 M1252 610.500Q1285 612 1287 644" fill="none" stroke="#000" stroke-width=".6"/><rect x="1092.5" y="606.5" width="163" height="6" fill="#77735a" stroke="none" stroke-width="0"/><path d="M1092.500 609.500H1255.500" fill="none" stroke="#E8CC30" stroke-width="1.6"/><rect x="1085.6" y="612.5" width="177.4" height="5" fill="#C9A227" stroke="#000" stroke-width="0.6"/><rect x="1010.6" y="583.75" width="28.8" height="28.3" fill="#FFE033" stroke="#000" stroke-width="0.7"/><rect x="1015.5" y="588.5" width="5" height="18" fill="#FFE033" stroke="#000" stroke-width="0.5"/><rect x="1029.5" y="588.5" width="5" height="18" fill="#FFE033" stroke="#000" stroke-width="0.5"/><circle cx="1025" cy="597.75" r="6.8" fill="#4a4a4a" stroke="#000" stroke-width="0.6"/><circle cx="1025" cy="597.75" r="4.8" fill="#8c8c8c" stroke="#000" stroke-width="0.4"/><circle cx="1025" cy="597.75" r="1.2" fill="#222" stroke="#000" stroke-width="0.2"/><rect x="1308.6" y="583.75" width="28.8" height="28.3" fill="#FFE033" stroke="#000" stroke-width="0.7"/><rect x="1313.5" y="588.5" width="5" height="18" fill="#FFE033" stroke="#000" stroke-width="0.5"/><rect x="1327.5" y="588.5" width="5" height="18" fill="#FFE033" stroke="#000" stroke-width="0.5"/><circle cx="1323" cy="597.75" r="6.8" fill="#4a4a4a" stroke="#000" stroke-width="0.6"/><circle cx="1323" cy="597.75" r="4.8" fill="#8c8c8c" stroke="#000" stroke-width="0.4"/><circle cx="1323" cy="597.75" r="1.2" fill="#222" stroke="#000" stroke-width="0.2"/><rect x="1057.5" y="638.75" width="90.9" height="5.65" fill="#FFE033" stroke="#000" stroke-width="0.7"/><rect x="1223.3" y="638.75" width="67.2" height="5.65" fill="#FFE033" stroke="#000" stroke-width="0.7"/><rect x="1034" y="681" width="24" height="4.5" fill="#FFE033" stroke="#000" stroke-width="0.6"/><rect x="1290" y="681" width="24" height="4.5" fill="#FFE033" stroke="#000" stroke-width="0.6"/><rect x="1055" y="650" width="4.5" height="33" fill="#FFE033" stroke="#000" stroke-width="0.5"/><rect x="1288.5" y="650" width="4.5" height="33" fill="#FFE033" stroke="#000" stroke-width="0.5"/><rect x="1148.4" y="606.5" width="74.9" height="66.1" fill="#FFE033" stroke="#000" stroke-width="0.7"/><rect x="1059.6" y="672.6" width="230.4" height="5.7" fill="#FFE033" stroke="#000" stroke-width="0.7"/><path d="M1199.400 617.500V672" fill="none" stroke="#000" stroke-width="0.7"/><rect x="1085.6" y="612.5" width="177.4" height="5" fill="#C9A227" stroke="#000" stroke-width="0.6"/><path d="M1165.5 606V665" fill="none" stroke="#3a3a3a" stroke-width="1.6"/><path d="M1170.5 606V665" fill="none" stroke="#3a3a3a" stroke-width="1.6"/><path d="M1177 606V665" fill="none" stroke="#3a3a3a" stroke-width="1.6"/><path d="M1183 606V665" fill="none" stroke="#3a3a3a" stroke-width="1.6"/><path d="M1181 618Q1196 612 1194 628Q1192 636 1182 634" fill="none" stroke="#111" stroke-width="4"/><rect x="1152" y="628" width="4.5" height="62" fill="#FFE033" stroke="#000" stroke-width="0.6"/><rect x="1191" y="628" width="4.5" height="62" fill="#FFE033" stroke="#000" stroke-width="0.6"/><rect x="1157.5" y="630" width="35" height="40" fill="#FFE033" stroke="#000" stroke-width="0.7"/><path d="M1157.500 651H1192.500" fill="none" stroke="#000" stroke-width="0.8"/><path d="M1160 664H1190" fill="none" stroke="#7a6a1a" stroke-width="2.2" stroke-dasharray="1.5 1.5"/><rect x="1150" y="645" width="3" height="15" fill="#C9A227" stroke="#000" stroke-width="0.5"/><rect x="1195" y="645" width="3" height="15" fill="#C9A227" stroke="#000" stroke-width="0.5"/><path d="M1168 672 1180 672 1182 679 1166 679z" fill="#FFE033" stroke="#000" stroke-width="0.6"/><rect x="1169" y="679" width="10" height="7" fill="#FFE01A" stroke="#000" stroke-width="0.5"/><path d="M1151.600 690 1156 686 1191 686 1195.400 690 1195.400 698 1191 701.500 1156 701.500 1151.600 698z" fill="#F5D21E" stroke="#000" stroke-width="0.7"/><path d="M1163 686V701.500 M1184 686V701.500" fill="none" stroke="#000" stroke-width="0.6"/><path d="M1173 701C1171 716 1178 722 1186 726C1192 729 1195 733 1195 738" fill="none" stroke="#000" stroke-width="6.500"/><path d="M1158 737Q1156 730 1160 731Q1164 733 1165 738z" fill="#000"/><defs><linearGradient id="lg" x1="0" x2="1"><stop offset="0" stop-color="#B80000"/><stop offset=".06" stop-color="#D40000"/><stop offset=".2" stop-color="#FF0000"/><stop offset="1" stop-color="#FF0000"/></linearGradient></defs><path d="M1074.600 895H1274L1273 940Q1272 975 1239.400 988.500H1104Q1078 975 1076 940z" fill="url(#lg)" stroke="#000" stroke-width=".8"/><path d="M1159.600 988.500 1190.800 988.500 1186 1000 1183 1016 1167 1016 1164 1000z" fill="#F00000" stroke="#000" stroke-width="0.6"/><path d="M1147 988.500l2 6M1152 988.500l1 6M1196 988.500l-1 6M1201 988.500l-2 6 M1170 1003V1016 M1180 1003V1016" fill="none" stroke="#000" stroke-width="0.7"/><path d="M1067 754.600 1281 754.600 1278.600 803 1071 803z" fill="url(#lg)" stroke="#000" stroke-width="0.8"/><rect x="1071" y="803" width="207.6" height="12.3" fill="url(#lg)" stroke="#000" stroke-width="0.7"/><rect x="1067" y="736.6" width="214" height="9.4" fill="url(#lg)" stroke="#000" stroke-width="0.8"/><path d="M1058.300 746 1289.700 746 1286 754.600 1062 754.600z" fill="url(#lg)" stroke="#000" stroke-width="0.8"/><path d="M1067.5 754.600 1072.5 754.600 1071.5 761z" fill="#E00000" stroke="#000" stroke-width="0.5"/><path d="M1077.5 754.600 1082.5 754.600 1081.5 761z" fill="#E00000" stroke="#000" stroke-width="0.5"/><path d="M1093.5 754.600 1098.5 754.600 1097.5 761z" fill="#E00000" stroke="#000" stroke-width="0.5"/><path d="M1112.5 754.600 1117.5 754.600 1116.5 761z" fill="#E00000" stroke="#000" stroke-width="0.5"/><path d="M1134.5 754.600 1139.5 754.600 1138.5 761z" fill="#E00000" stroke="#000" stroke-width="0.5"/><path d="M1157.5 754.600 1162.5 754.600 1161.5 761z" fill="#E00000" stroke="#000" stroke-width="0.5"/><path d="M1180.5 754.600 1185.5 754.600 1181.5 761z" fill="#E00000" stroke="#000" stroke-width="0.5"/><path d="M1203.5 754.600 1208.5 754.600 1204.5 761z" fill="#E00000" stroke="#000" stroke-width="0.5"/><path d="M1223.5 754.600 1228.5 754.600 1224.5 761z" fill="#E00000" stroke="#000" stroke-width="0.5"/><path d="M1242.5 754.600 1247.5 754.600 1243.5 761z" fill="#E00000" stroke="#000" stroke-width="0.5"/><path d="M1259.5 754.600 1264.5 754.600 1260.5 761z" fill="#E00000" stroke="#000" stroke-width="0.5"/><path d="M1272.5 754.600 1277.5 754.600 1273.5 761z" fill="#E00000" stroke="#000" stroke-width="0.5"/><path d="M1058.300 815.300H1289.700V836L1286 895H1062L1058.300 836z" fill="url(#lg)" stroke="#000" stroke-width=".8"/><path d="M1062 819 1081 819 1084 890 1071 890z" fill="#F40000" stroke="#000" stroke-width="0.6"/><path d="M1266 819 1285 819 1277 890 1264 890z" fill="#F40000" stroke="#000" stroke-width="0.6"/><path d="M1063 820 1079 820 1070 829z" fill="#E80000" stroke="#000" stroke-width="0.5"/><path d="M1268 820 1284 820 1277 829z" fill="#E80000" stroke="#000" stroke-width="0.5"/><path d="M1066 889 1074 881 1078 889z" fill="#E80000" stroke="#000" stroke-width="0.5"/><path d="M1270 889 1274 881 1282 889z" fill="#E80000" stroke="#000" stroke-width="0.5"/><path d="M1071 907.300H1274 M1076 959.300H1272 M1249 737V803 M1100.600 803L1103 895 M1244.600 907.300L1242 959.300 M1173.500 959.300V988.500 M1062 819H1286 M1062 891H1286" fill="none" stroke="#000" stroke-width="0.7"/><path d="M1058.300 815.300H1070V803 M1289.700 815.300H1278V803" fill="none" stroke="#000" stroke-width="0.6"/><circle cx="1077" cy="792" r=".6" fill="#600"/><circle cx="1090" cy="792" r=".6" fill="#600"/><circle cx="1110" cy="792" r=".6" fill="#600"/><circle cx="1134" cy="792" r=".6" fill="#600"/><circle cx="1160" cy="792" r=".6" fill="#600"/><circle cx="1187" cy="792" r=".6" fill="#600"/><circle cx="1214" cy="792" r=".6" fill="#600"/><circle cx="1238" cy="792" r=".6" fill="#600"/><circle cx="1257" cy="792" r=".6" fill="#600"/><circle cx="1270" cy="792" r=".6" fill="#600"/><circle cx="1138" cy="832" r=".6" fill="#600"/><circle cx="1174" cy="832" r=".6" fill="#600"/><circle cx="1209" cy="832" r=".6" fill="#600"/><circle cx="1241" cy="832" r=".6" fill="#600"/><circle cx="1123" cy="855" r=".6" fill="#600"/><circle cx="1156" cy="855" r=".6" fill="#600"/><circle cx="1191" cy="855" r=".6" fill="#600"/><circle cx="1226" cy="855" r=".6" fill="#600"/><circle cx="1109" cy="878" r=".6" fill="#600"/><circle cx="1140" cy="878" r=".6" fill="#600"/><circle cx="1174" cy="878" r=".6" fill="#600"/><circle cx="1209" cy="878" r=".6" fill="#600"/><circle cx="1240" cy="878" r=".6" fill="#600"/><circle cx="1091" cy="924" r=".6" fill="#600"/><circle cx="1120" cy="924" r=".6" fill="#600"/><circle cx="1158" cy="924" r=".6" fill="#600"/><circle cx="1199" cy="924" r=".6" fill="#600"/><circle cx="1236" cy="924" r=".6" fill="#600"/><circle cx="1260" cy="924" r=".6" fill="#600"/><circle cx="1083" cy="941" r=".6" fill="#600"/><circle cx="1105" cy="941" r=".6" fill="#600"/><circle cx="1139" cy="941" r=".6" fill="#600"/><circle cx="1180" cy="941" r=".6" fill="#600"/><circle cx="1218" cy="941" r=".6" fill="#600"/><circle cx="1250" cy="941" r=".6" fill="#600"/><circle cx="1268" cy="941" r=".6" fill="#600"/><path d="M794 516V630 M820.500 516V630" fill="none" stroke="#000" stroke-width="4.1" stroke-linejoin="round"/><path d="M794 516V630 M820.500 516V630" fill="none" stroke="#F2D22E" stroke-width="2.2" stroke-linejoin="round"/><path d="M796 525H819 M796 539.400H819 M796 553.750H819 M796 568H819 M796 582.500H819 M796 596H819 M796 610H819" fill="none" stroke="#000" stroke-width="3.4" stroke-linejoin="round"/><path d="M796 525H819 M796 539.400H819 M796 553.750H819 M796 568H819 M796 582.500H819 M796 596H819 M796 610H819" fill="none" stroke="#F2D22E" stroke-width="1.5" stroke-linejoin="round"/><path d="M789.500 560V755" fill="none" stroke="#000" stroke-width="3.9" stroke-linejoin="round"/><path d="M789.500 560V755" fill="none" stroke="#F2D22E" stroke-width="2" stroke-linejoin="round"/><rect x="790.6" y="625" width="37.4" height="5.5" fill="#FFE033" stroke="#000" stroke-width="0.7"/><path d="M826 520V560" fill="none" stroke="#666" stroke-width="1"/><rect x="828" y="515" width="102.6" height="115" fill="#FFE033" stroke="#000" stroke-width="0.9"/><rect x="832.5" y="519.5" width="93.5" height="105.5" fill="#F6D52F" stroke="#000" stroke-width="0.6"/><rect x="837" y="523.75" width="38" height="41.85" fill="#000" stroke="#000" stroke-width="0.3"/><rect x="884" y="523.75" width="38.5" height="41.85" fill="#000" stroke="#000" stroke-width="0.3"/><rect x="837" y="578" width="38" height="43" fill="#000" stroke="#000" stroke-width="0.3"/><rect x="884" y="578" width="38.5" height="43" fill="#000" stroke="#000" stroke-width="0.3"/><rect x="875" y="521" width="9" height="103" fill="#FFE033" stroke="#000" stroke-width="0.6"/><path d="M878 521V624 M881 521V624" fill="none" stroke="#000" stroke-width="0.5"/><rect x="834" y="566" width="92" height="12" fill="#FFE033" stroke="#000" stroke-width="0.6"/><path d="M834 570H926 M834 574H926" fill="none" stroke="#000" stroke-width="0.5"/><rect x="872.5" y="566" width="14.5" height="13" fill="#FFE033" stroke="#000" stroke-width="0.7"/><rect x="834" y="521" width="8" height="8" fill="#FFE033" stroke="#000" stroke-width="0.5"/><rect x="918" y="521" width="8" height="8" fill="#FFE033" stroke="#000" stroke-width="0.5"/><rect x="834" y="566" width="8" height="8" fill="#FFE033" stroke="#000" stroke-width="0.5"/><rect x="918" y="566" width="8" height="8" fill="#FFE033" stroke="#000" stroke-width="0.5"/><rect x="834" y="616" width="8" height="8" fill="#FFE033" stroke="#000" stroke-width="0.5"/><rect x="918" y="616" width="8" height="8" fill="#FFE033" stroke="#000" stroke-width="0.5"/><rect x="873" y="521" width="13" height="8" fill="#FFE033" stroke="#000" stroke-width="0.5"/><rect x="873" y="616" width="13" height="8" fill="#FFE033" stroke="#000" stroke-width="0.5"/><rect x="931" y="515" width="9" height="114" fill="#FFE033" stroke="#000" stroke-width="0.7"/><path d="M935 519V627" fill="none" stroke="#000" stroke-width="0.6"/><rect x="940" y="519" width="41" height="6" fill="#FFE033" stroke="#000" stroke-width="0.7"/><path d="M941 525 947 525 991 572 991 579z" fill="none" stroke="#000" stroke-width="0"/><path d="M941 525 948 525 992 570 992 578z" fill="#FFE033" stroke="#000" stroke-width="0.7"/><path d="M973 525 980.500 525 944 628 937 628z" fill="#FFE033" stroke="#000" stroke-width="0.7"/><path d="M980 560 991.500 575 991.500 581z" fill="#FFE033" stroke="#000" stroke-width="0.7"/><rect x="788.4" y="630" width="6.1" height="236" fill="#FFE033" stroke="#000" stroke-width="0.6"/><rect x="795" y="637.5" width="25" height="47.5" fill="#000" stroke="#000" stroke-width="0.3"/><path d="M796 653.750H819 M796 667.500H819 M796 681H819" fill="none" stroke="#C9A82A" stroke-width="1.2"/><path d="M796 695H820 M796 708.750H821 M796 717H822 M796 723H822 M796 737H823" fill="none" stroke="#000" stroke-width="3.3" stroke-linejoin="round"/><path d="M796 695H820 M796 708.750H821 M796 717H822 M796 723H822 M796 737H823" fill="none" stroke="#F2D22E" stroke-width="1.4" stroke-linejoin="round"/><path d="M822 632V760 M827.500 632V866 M833 632V760" fill="none" stroke="#000" stroke-width="3.4" stroke-linejoin="round"/><path d="M822 632V760 M827.500 632V866 M833 632V760" fill="none" stroke="#F2D22E" stroke-width="1.5" stroke-linejoin="round"/><rect x="822" y="631" width="109" height="137" fill="#FFE033" stroke="#000" stroke-width="0.5"/><rect x="833" y="631" width="98" height="5" fill="#FFE033" stroke="#000" stroke-width="0.6"/><rect x="848.75" y="631" width="66.25" height="137.3" fill="#FFE033" stroke="#000" stroke-width="0.9"/><rect x="837.5" y="638" width="10" height="32" fill="#FFE033" stroke="#000" stroke-width="0.6"/><rect x="839" y="642" width="7" height="24" fill="#FFE860" stroke="#000" stroke-width="0.5"/><rect x="837.5" y="675" width="10" height="28.75" fill="#F3D030" stroke="#000" stroke-width="0.6"/><rect x="837.5" y="706" width="10" height="37.75" fill="#F3D030" stroke="#000" stroke-width="0.6"/><rect x="837.5" y="675" width="10.0" height="68.750" fill="url(#dots)"/><rect x="837.5" y="745" width="10" height="23" fill="#FFE033" stroke="#000" stroke-width="0.5"/><path d="M837.5 750H847.5 M837.5 755H847.5 M837.5 760H847.5" fill="none" stroke="#000" stroke-width="0.5"/><rect x="916" y="638" width="10" height="32" fill="#FFE033" stroke="#000" stroke-width="0.6"/><rect x="917.5" y="642" width="7" height="24" fill="#FFE860" stroke="#000" stroke-width="0.5"/><rect x="916" y="675" width="10" height="28.75" fill="#F3D030" stroke="#000" stroke-width="0.6"/><rect x="916" y="706" width="10" height="37.75" fill="#F3D030" stroke="#000" stroke-width="0.6"/><rect x="916" y="675" width="10" height="68.750" fill="url(#dots)"/><rect x="916" y="745" width="10" height="23" fill="#FFE033" stroke="#000" stroke-width="0.5"/><path d="M916 750H926 M916 755H926 M916 760H926" fill="none" stroke="#000" stroke-width="0.5"/><rect x="833" y="636" width="4.5" height="132" fill="#FFE033" stroke="#000" stroke-width="0.5"/><rect x="926" y="636" width="5" height="132" fill="#FFE033" stroke="#000" stroke-width="0.5"/><path d="M812.400 632.400H952.700L939.400 768.500H824.500z" fill="none" stroke="#000" stroke-width="1.600"/><path d="M1010 661 1010 669 941 744 934.500 738z" fill="#FFE033" stroke="#000" stroke-width="0.8"/><path d="M931 731 940 738 934 747 928 742z" fill="#FFE033" stroke="#000" stroke-width="0.6"/><rect x="788.4" y="752" width="59.6" height="5.5" fill="#FFE033" stroke="#000" stroke-width="0.7"/><rect x="790" y="744" width="32" height="8" fill="#FFE033" stroke="#000" stroke-width="0.5"/><path d="M789 759 800 759 792 767z" fill="#FFE033" stroke="#000" stroke-width="0.5"/><path d="M837.700 768.800 847 768.800 899.700 865 890.300 865z" fill="#FFE033" stroke="#000" stroke-width="0.8"/><path d="M850.700 778L865 770L881.700 797.600 M885 769.500L899 792V865 M884.500 805L897.500 828" fill="none" stroke="#000" stroke-width="3.5" stroke-linejoin="round"/><path d="M850.700 778L865 770L881.700 797.600 M885 769.500L899 792V865 M884.500 805L897.500 828" fill="none" stroke="#F2D22E" stroke-width="1.6" stroke-linejoin="round"/><path d="M883.500 768V865" fill="none" stroke="#000" stroke-width="4.1" stroke-linejoin="round"/><path d="M883.500 768V865" fill="none" stroke="#F2D22E" stroke-width="2.2" stroke-linejoin="round"/><rect x="835.6" y="768" width="3.4" height="97" fill="#FFE033" stroke="#000" stroke-width="0.6"/><rect x="925.3" y="768" width="5.7" height="98" fill="#FFE033" stroke="#000" stroke-width="0.6"/><path d="M795 865V820Q795 811.500 803 811.500H817Q824.750 811.500 824.750 820V865 M797 842H823" fill="none" stroke="#000" stroke-width="3.7" stroke-linejoin="round"/><path d="M795 865V820Q795 811.500 803 811.500H817Q824.750 811.500 824.750 820V865 M797 842H823" fill="none" stroke="#F2D22E" stroke-width="1.8" stroke-linejoin="round"/><rect x="788.4" y="809" width="142.6" height="2.8" fill="#FFE033" stroke="#000" stroke-width="0.7"/><rect x="788.4" y="837.7" width="142.6" height="2.5" fill="#FFE033" stroke="#000" stroke-width="0.7"/><rect x="788.4" y="865.4" width="142.6" height="15.1" fill="#FFE033" stroke="#000" stroke-width="0.9"/><path d="M789 877.500H930.500 M835 877.500V880.500 M883 877.500V880.500" fill="none" stroke="#000" stroke-width="0.6"/><circle cx="821" cy="825" r="1.2" fill="#222" stroke="#000" stroke-width="0.3"/><rect x="823" y="833" width="6" height="3" fill="#ccd" stroke="#000" stroke-width="0.3"/><rect x="1366.4" y="495.8" width="49.4" height="10.2" fill="#FFE033" stroke="#000" stroke-width="0.7"/><rect x="1366.4" y="506.6" width="46" height="8.1" fill="#FFE033" stroke="#000" stroke-width="0.7"/><rect x="1366.4" y="522.9" width="71.1" height="5.4" fill="#FFE033" stroke="#000" stroke-width="0.7"/><path d="M1372.500 528.300 1378 528.300 1442 669.500 1436 669.500z" fill="#FFE033" stroke="#000" stroke-width="0.7"/><path d="M1428 528.300 1437.500 528.300 1437.500 540z" fill="#FFE033" stroke="#000" stroke-width="0.5"/><path d="M1439 514V685 M1516.500 514V685 M1476 514V685 M1494 514V680 M1479.500 520V680 M1506.500 520V680" fill="none" stroke="#000" stroke-width="3.7" stroke-linejoin="round"/><path d="M1439 514V685 M1516.500 514V685 M1476 514V685 M1494 514V680 M1479.500 520V680 M1506.500 520V680" fill="none" stroke="#F2D22E" stroke-width="1.8" stroke-linejoin="round"/><path d="M1436 538.5H1520" fill="none" stroke="#000" stroke-width="3.4" stroke-linejoin="round"/><path d="M1436 538.5H1520" fill="none" stroke="#F2D22E" stroke-width="1.5" stroke-linejoin="round"/><path d="M1436 566.7H1520" fill="none" stroke="#000" stroke-width="3.4" stroke-linejoin="round"/><path d="M1436 566.7H1520" fill="none" stroke="#F2D22E" stroke-width="1.5" stroke-linejoin="round"/><path d="M1436 595H1520" fill="none" stroke="#000" stroke-width="3.4" stroke-linejoin="round"/><path d="M1436 595H1520" fill="none" stroke="#F2D22E" stroke-width="1.5" stroke-linejoin="round"/><path d="M1436 623H1520" fill="none" stroke="#000" stroke-width="3.4" stroke-linejoin="round"/><path d="M1436 623H1520" fill="none" stroke="#F2D22E" stroke-width="1.5" stroke-linejoin="round"/><path d="M1436 651H1520" fill="none" stroke="#000" stroke-width="3.4" stroke-linejoin="round"/><path d="M1436 651H1520" fill="none" stroke="#F2D22E" stroke-width="1.5" stroke-linejoin="round"/><path d="M1480 530.3H1506" fill="none" stroke="#000" stroke-width="3.1" stroke-linejoin="round"/><path d="M1480 530.3H1506" fill="none" stroke="#F2D22E" stroke-width="1.2" stroke-linejoin="round"/><path d="M1480 545.9H1506" fill="none" stroke="#000" stroke-width="3.1" stroke-linejoin="round"/><path d="M1480 545.9H1506" fill="none" stroke="#F2D22E" stroke-width="1.2" stroke-linejoin="round"/><path d="M1480 560H1506" fill="none" stroke="#000" stroke-width="3.1" stroke-linejoin="round"/><path d="M1480 560H1506" fill="none" stroke="#F2D22E" stroke-width="1.2" stroke-linejoin="round"/><path d="M1480 574H1506" fill="none" stroke="#000" stroke-width="3.1" stroke-linejoin="round"/><path d="M1480 574H1506" fill="none" stroke="#F2D22E" stroke-width="1.2" stroke-linejoin="round"/><path d="M1480 588H1506" fill="none" stroke="#000" stroke-width="3.1" stroke-linejoin="round"/><path d="M1480 588H1506" fill="none" stroke="#F2D22E" stroke-width="1.2" stroke-linejoin="round"/><path d="M1480 602H1506" fill="none" stroke="#000" stroke-width="3.1" stroke-linejoin="round"/><path d="M1480 602H1506" fill="none" stroke="#F2D22E" stroke-width="1.2" stroke-linejoin="round"/><path d="M1480 616H1506" fill="none" stroke="#000" stroke-width="3.1" stroke-linejoin="round"/><path d="M1480 616H1506" fill="none" stroke="#F2D22E" stroke-width="1.2" stroke-linejoin="round"/><path d="M1480 630H1506" fill="none" stroke="#000" stroke-width="3.1" stroke-linejoin="round"/><path d="M1480 630H1506" fill="none" stroke="#F2D22E" stroke-width="1.2" stroke-linejoin="round"/><path d="M1480 644H1506" fill="none" stroke="#000" stroke-width="3.1" stroke-linejoin="round"/><path d="M1480 644H1506" fill="none" stroke="#F2D22E" stroke-width="1.2" stroke-linejoin="round"/><path d="M1480 658H1506" fill="none" stroke="#000" stroke-width="3.1" stroke-linejoin="round"/><path d="M1480 658H1506" fill="none" stroke="#F2D22E" stroke-width="1.2" stroke-linejoin="round"/><path d="M1480 672H1506" fill="none" stroke="#000" stroke-width="3.1" stroke-linejoin="round"/><path d="M1480 672H1506" fill="none" stroke="#F2D22E" stroke-width="1.2" stroke-linejoin="round"/><rect x="1437.5" y="513.4" width="81.2" height="3.6" fill="#FFE033" stroke="#000" stroke-width="0.6"/><rect x="1438" y="679.6" width="80" height="6" fill="#FFE033" stroke="#000" stroke-width="0.7"/><rect x="1423" y="611" width="110" height="4" fill="#FFE033" stroke="#000" stroke-width="0.6"/><rect x="1423" y="662" width="110" height="4" fill="#FFE033" stroke="#000" stroke-width="0.6"/><rect x="1423" y="611" width="3.5" height="55" fill="#FFE033" stroke="#000" stroke-width="0.5"/><rect x="1529.5" y="611" width="3.5" height="55" fill="#FFE033" stroke="#000" stroke-width="0.5"/><path d="M1461 611V666 M1497 611V666 M1423 638H1533" fill="none" stroke="#8a7a1a" stroke-width="1.2"/><rect x="1430.5" y="605" width="9" height="6.5" fill="#333" stroke="#000" stroke-width="0.4"/><rect x="1432" y="603.5" width="6" height="2" fill="#b33" stroke="#000" stroke-width="0.3"/><rect x="1472.5" y="605" width="9" height="6.5" fill="#333" stroke="#000" stroke-width="0.4"/><rect x="1474" y="603.5" width="6" height="2" fill="#b33" stroke="#000" stroke-width="0.3"/><rect x="1515.5" y="605" width="9" height="6.5" fill="#333" stroke="#000" stroke-width="0.4"/><rect x="1517" y="603.5" width="6" height="2" fill="#b33" stroke="#000" stroke-width="0.3"/><rect x="1430.5" y="631.5" width="9" height="6.5" fill="#333" stroke="#000" stroke-width="0.4"/><rect x="1432" y="630" width="6" height="2" fill="#b33" stroke="#000" stroke-width="0.3"/><rect x="1472.5" y="631.5" width="9" height="6.5" fill="#333" stroke="#000" stroke-width="0.4"/><rect x="1474" y="630" width="6" height="2" fill="#b33" stroke="#000" stroke-width="0.3"/><rect x="1515.5" y="631.5" width="9" height="6.5" fill="#333" stroke="#000" stroke-width="0.4"/><rect x="1517" y="630" width="6" height="2" fill="#b33" stroke="#000" stroke-width="0.3"/><rect x="1430.5" y="657.5" width="9" height="6.5" fill="#333" stroke="#000" stroke-width="0.4"/><rect x="1432" y="656" width="6" height="2" fill="#b33" stroke="#000" stroke-width="0.3"/><rect x="1472.5" y="657.5" width="9" height="6.5" fill="#333" stroke="#000" stroke-width="0.4"/><rect x="1474" y="656" width="6" height="2" fill="#b33" stroke="#000" stroke-width="0.3"/><rect x="1515.5" y="657.5" width="9" height="6.5" fill="#333" stroke="#000" stroke-width="0.4"/><rect x="1517" y="656" width="6" height="2" fill="#b33" stroke="#000" stroke-width="0.3"/><path d="M1466 686V692 M1490 686V692" fill="none" stroke="#000" stroke-width="0.6"/><path d="M499.200 960V926.800H504V960z" fill="#A8D4FF" stroke="#7f93a8" stroke-width=".6"/><path d="M497 926.800L501.600 910L506 926.800z" fill="#8fc0ff" stroke="#7f9fc8" stroke-width=".5"/><path d="M495 964H461.800V968.700H495z" fill="#FF9C9C" stroke="#c88" stroke-width=".6"/><path d="M461.800 961.500L446 966.300L461.800 971z" fill="#FF8A8A" stroke="#d88" stroke-width=".5"/><circle cx="501.900" cy="966.200" r="6.300" fill="#4f9a3c" stroke="#EDED7A" stroke-width="1.600"/><path d="M499 962.500l2.900 3.500 2.900-3.500M501.900 966v4" stroke="#2c6a20" stroke-width="1.200" fill="none"/><text x="497.500" y="907" font-family="Liberation Serif,serif" font-size="13.500" fill="#5A9BFF">Z</text><text x="433.500" y="971" font-family="Liberation Serif,serif" font-size="13.500" fill="#FF5A5A">X</text></svg>
</body></html>
